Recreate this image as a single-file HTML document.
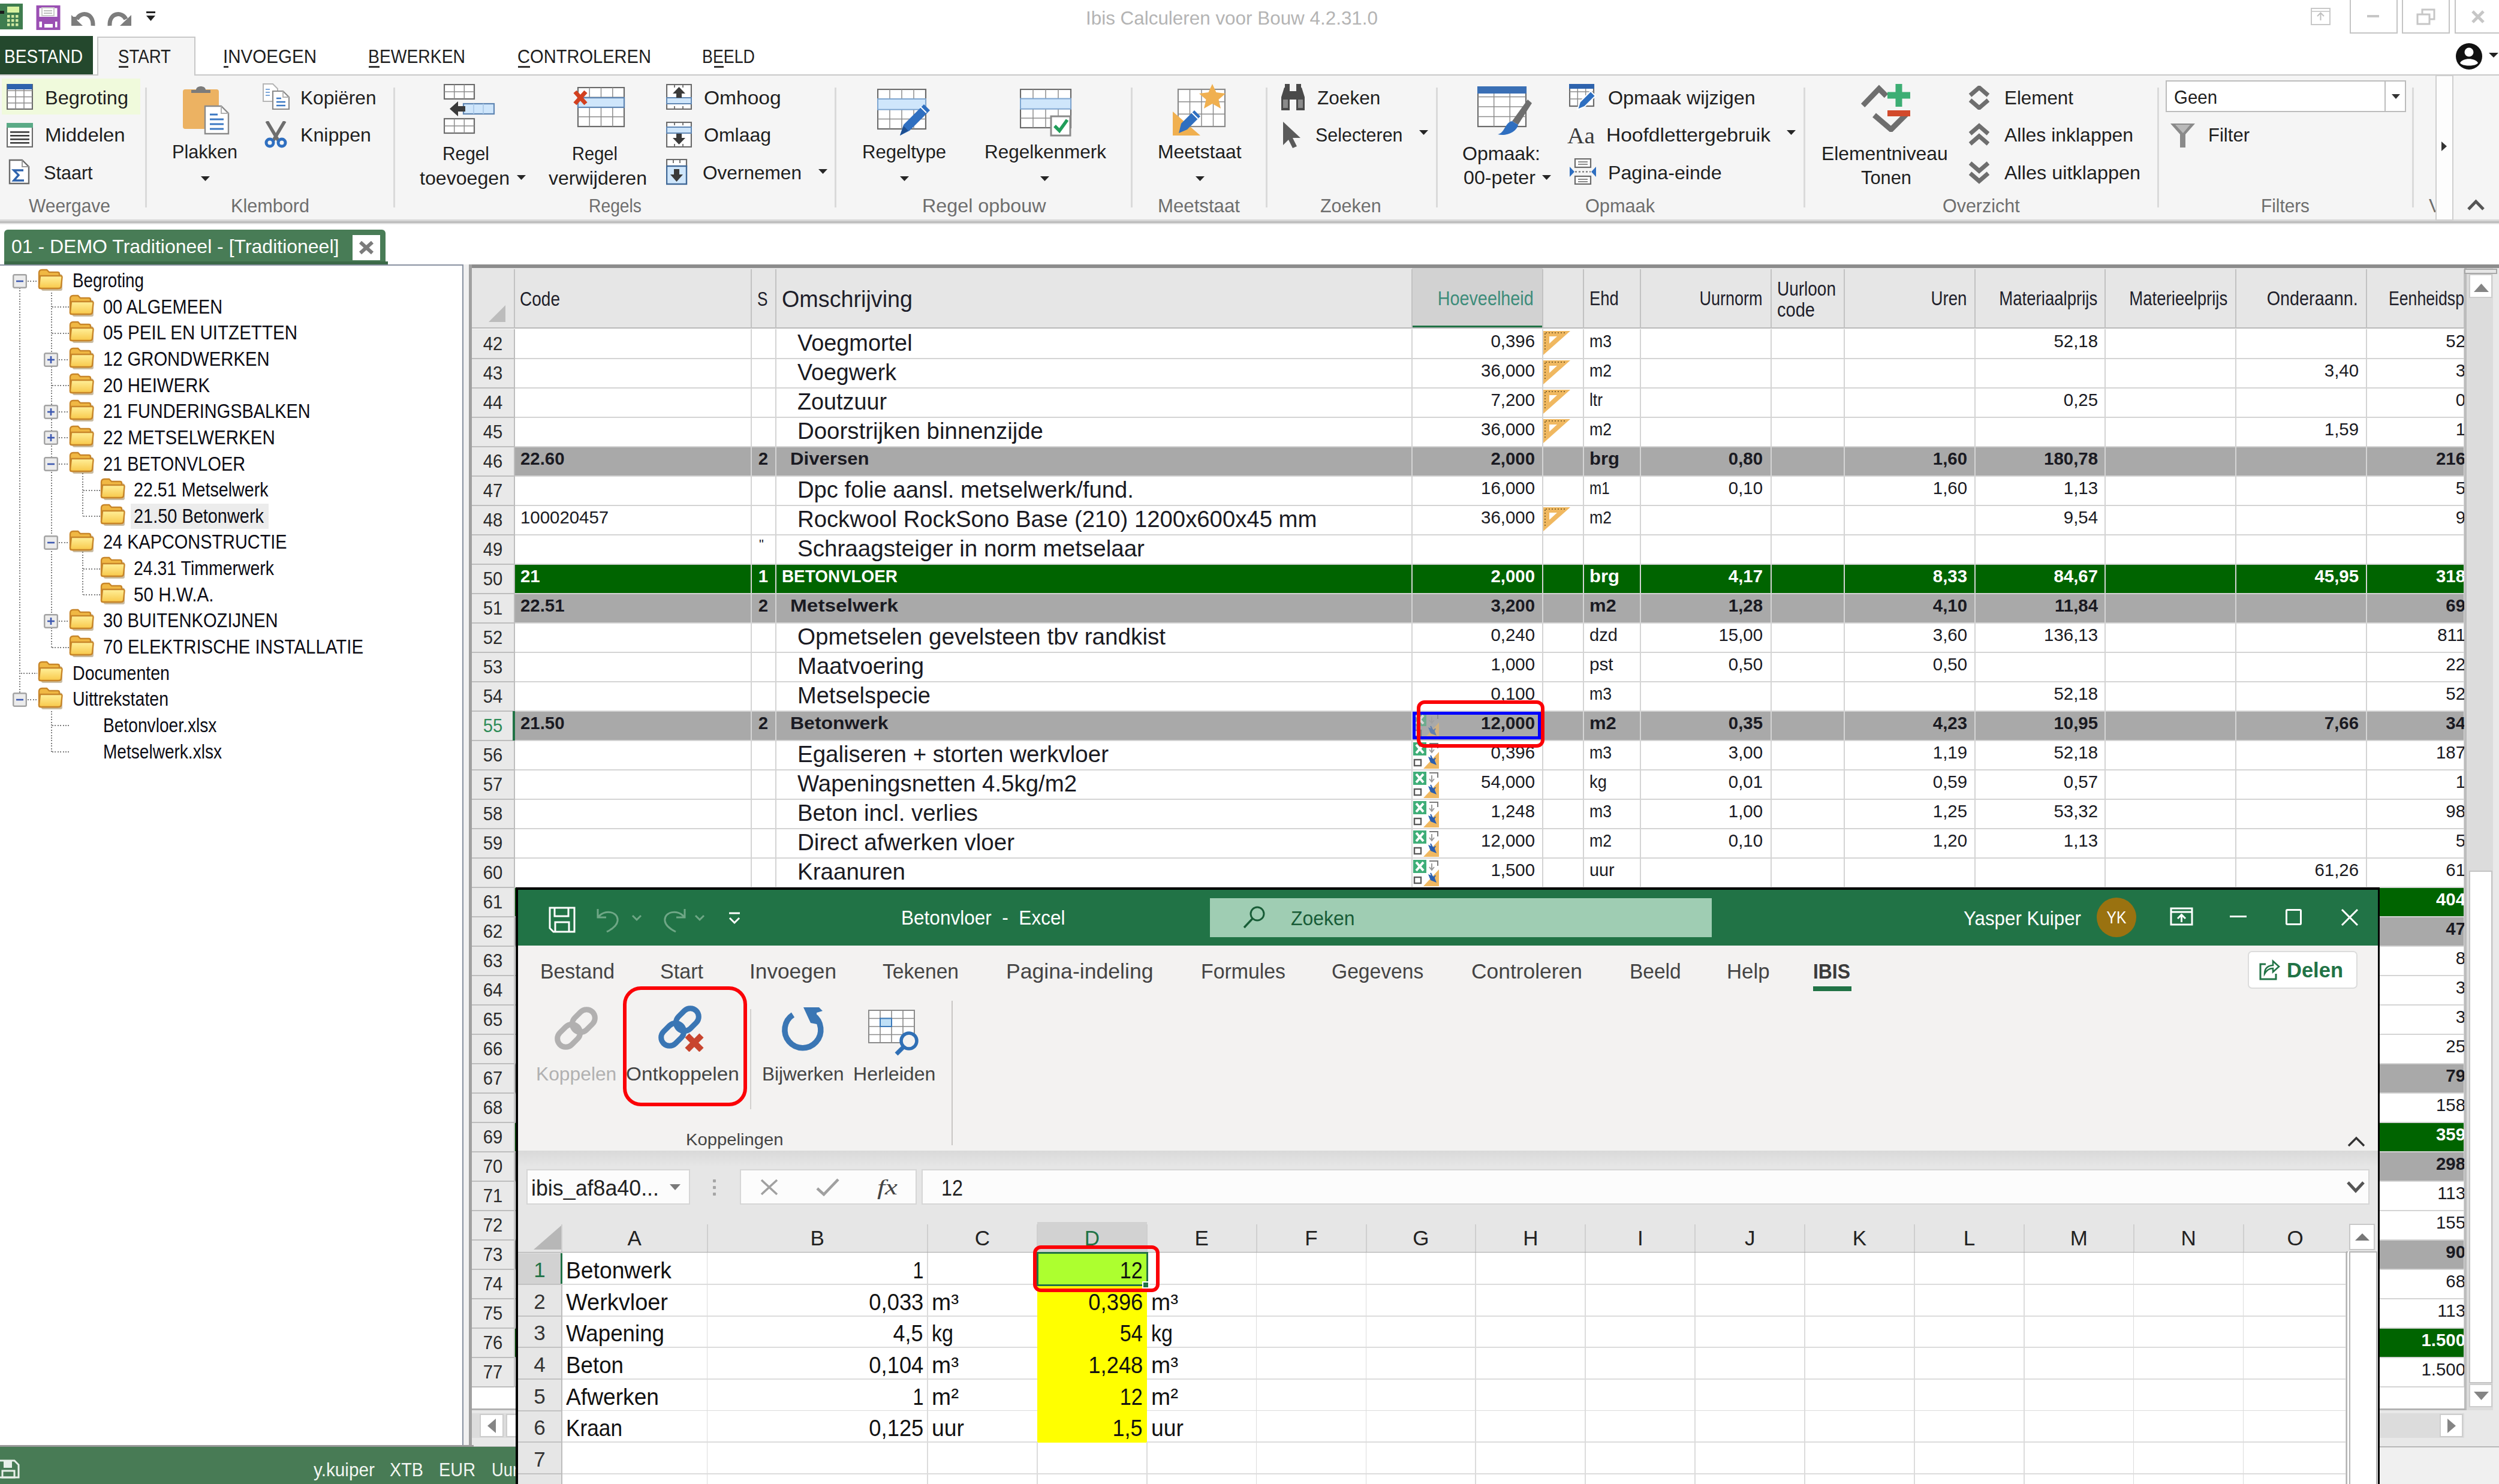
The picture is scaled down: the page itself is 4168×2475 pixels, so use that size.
<!DOCTYPE html>
<html><head><meta charset="utf-8"><title>Ibis Calculeren voor Bouw</title>
<style>
html,body{margin:0;padding:0;background:#fff;}
body{width:4168px;height:2475px;position:relative;overflow:hidden;font-family:"Liberation Sans",sans-serif;}
body>div,body>svg,body>span{position:absolute;}
.t{white-space:pre;display:block;}
</style></head>
<body>
<span class="t" style="top:9.4px;font-size:32px;line-height:42px;color:#b4b4b4;left:1811px;transform:scaleX(0.9813);transform-origin:left center;">Ibis Calculeren voor Bouw 4.2.31.0</span>
<svg style="left:0px;top:6px;" width="40" height="44" viewBox="0 0 40 44"><rect x="-6" y="0" width="44" height="43" fill="#3f7d4f"/><rect x="12" y="5" width="20" height="10" fill="#d9f2a0"/><rect x="12" y="19" width="4.5" height="4.5" fill="#cfe8a0"/><rect x="12" y="26" width="4.5" height="4.5" fill="#cfe8a0"/><rect x="12" y="33" width="4.5" height="4.5" fill="#cfe8a0"/><rect x="19" y="19" width="4.5" height="4.5" fill="#cfe8a0"/><rect x="19" y="26" width="4.5" height="4.5" fill="#cfe8a0"/><rect x="19" y="33" width="4.5" height="4.5" fill="#cfe8a0"/><rect x="26" y="19" width="4.5" height="4.5" fill="#cfe8a0"/><rect x="26" y="26" width="4.5" height="4.5" fill="#cfe8a0"/><rect x="26" y="33" width="4.5" height="4.5" fill="#cfe8a0"/><rect x="0" y="12" width="7" height="5" fill="#1c1c1c"/></svg>
<svg style="left:60px;top:9px;" width="41" height="41" viewBox="0 0 41 41"><path d="M3 2H38V39H3Z" fill="#fff" stroke="#9a4fb3" stroke-width="5"/><rect x="10" y="4" width="20" height="13" fill="#fff" stroke="#c9c9c9" stroke-width="2"/><rect x="13" y="8" width="14" height="2" fill="#bdbdbd"/><rect x="13" y="12" width="14" height="2" fill="#bdbdbd"/><rect x="3" y="19" width="35" height="8" fill="#9a4fb3"/><rect x="12" y="29" width="18" height="10" fill="#fff" stroke="#9a4fb3" stroke-width="4"/></svg>
<svg style="left:116px;top:16px;" width="46" height="30" viewBox="0 0 46 30"><path d="M9 26V12" stroke="#7d7d7d" stroke-width="7" fill="none"/><path d="M3 27H22L3 9Z" fill="#7d7d7d"/><path d="M12 16C18 3 40 4 39 27" stroke="#7d7d7d" stroke-width="7" fill="none"/></svg>
<svg style="left:176px;top:16px;" width="46" height="30" viewBox="0 0 46 30"><g transform="translate(46,0) scale(-1,1)"><path d="M3 27H22L3 9Z" fill="#7d7d7d"/><path d="M12 16C18 3 40 4 39 27" stroke="#7d7d7d" stroke-width="7" fill="none"/></g></svg>
<svg style="left:243px;top:18px;" width="18" height="20" viewBox="0 0 18 20"><rect x="1" y="1" width="15" height="3" fill="#222"/><path d="M1 8H16L8.5 17Z" fill="#222"/></svg>
<svg style="left:3853px;top:12px;" width="36" height="32" viewBox="0 0 36 32"><rect x="2" y="2" width="31" height="27" fill="#fff" stroke="#c8c8c8" stroke-width="2"/><path d="M17.5 22V10M12 15L17.5 9.5L23 15" stroke="#c0c0c0" stroke-width="2" fill="none"/><path d="M3 7H32" stroke="#d0d0d0" stroke-width="2"/></svg>
<div style="left:3919px;top:-2px;width:80px;height:58px;background:#fff;border:2px solid #c4c4c4;box-sizing:border-box;"></div>
<div style="left:4006px;top:-2px;width:80px;height:58px;background:#fff;border:2px solid #c4c4c4;box-sizing:border-box;"></div>
<div style="left:4094px;top:-2px;width:80px;height:58px;background:#fff;border:2px solid #c4c4c4;box-sizing:border-box;"></div>
<div style="left:3948px;top:25px;width:20px;height:4px;background:#c6c6c6;"></div>
<svg style="left:4030px;top:14px;" width="34" height="30" viewBox="0 0 34 30"><rect x="10" y="2" width="20" height="16" fill="#fff" stroke="#c6c6c6" stroke-width="3"/><rect x="2" y="10" width="20" height="16" fill="#fff" stroke="#c6c6c6" stroke-width="3"/></svg>
<svg style="left:4121px;top:16px;" width="24" height="24" viewBox="0 0 24 24"><path d="M3 3L21 21M21 3L3 21" stroke="#c6c6c6" stroke-width="5"/></svg>
<svg style="left:4095px;top:71px;" width="46" height="46" viewBox="0 0 46 46"><circle cx="23" cy="23" r="22" fill="#111"/><circle cx="23" cy="16" r="7.5" fill="#fff"/><path d="M8 34C12 25 34 25 38 34C34 40 12 40 8 34Z" fill="#fff"/></svg>
<svg style="left:4151px;top:88px;" width="17" height="10" viewBox="0 0 17 10"><path d="M0 0H16L8 8Z" fill="#222"/></svg>
<div style="left:0px;top:60px;width:155px;height:65px;background:#24482d;"></div>
<div style="left:0px;top:124px;width:4168px;height:2px;background:#c8c8c8;"></div>
<div style="left:162px;top:61px;width:164px;height:65px;background:#f5f5f5;border:2px solid #c8c8c8;border-bottom:none;box-sizing:border-box;"></div>
<span class="t" style="top:73.9px;font-size:31.5px;line-height:41px;color:#fff;left:7px;transform:scaleX(0.8945);transform-origin:left center;">BESTAND</span>
<span class="t" style="top:73.9px;font-size:31.5px;line-height:41px;color:#1e1e1e;left:197px;transform:scaleX(0.8768);transform-origin:left center;">START</span>
<div style="left:198px;top:110px;width:16px;height:2.5px;background:#333;"></div>
<span class="t" style="top:73.9px;font-size:31.5px;line-height:41px;color:#1e1e1e;left:372px;transform:scaleX(0.9381);transform-origin:left center;">INVOEGEN</span>
<div style="left:373px;top:110px;width:8px;height:2.5px;background:#333;"></div>
<span class="t" style="top:73.9px;font-size:31.5px;line-height:41px;color:#1e1e1e;left:614px;transform:scaleX(0.8986);transform-origin:left center;">BEWERKEN</span>
<div style="left:615px;top:110px;width:18px;height:2.5px;background:#333;"></div>
<span class="t" style="top:73.9px;font-size:31.5px;line-height:41px;color:#1e1e1e;left:863px;transform:scaleX(0.9233);transform-origin:left center;">CONTROLEREN</span>
<div style="left:864px;top:110px;width:20px;height:2.5px;background:#333;"></div>
<span class="t" style="top:73.9px;font-size:31.5px;line-height:41px;color:#1e1e1e;left:1171px;transform:scaleX(0.8518);transform-origin:left center;">BEELD</span>
<div style="left:1191px;top:110px;width:16px;height:2.5px;background:#333;"></div>
<div style="left:0px;top:126px;width:4168px;height:241px;background:#f5f5f5;"></div>
<div style="left:0px;top:366px;width:4168px;height:3px;background:#d6d6d6;"></div>
<div style="left:0px;top:369px;width:4168px;height:3px;background:#bdbdbd;"></div>
<div style="left:0px;top:372px;width:4168px;height:2px;background:#e4e4e4;"></div>
<div style="left:241.5px;top:146px;width:3px;height:200px;background:#dadada;"></div>
<div style="left:655.5px;top:146px;width:3px;height:200px;background:#dadada;"></div>
<div style="left:1391.5px;top:146px;width:3px;height:200px;background:#dadada;"></div>
<div style="left:1885.5px;top:146px;width:3px;height:200px;background:#dadada;"></div>
<div style="left:2110.5px;top:146px;width:3px;height:200px;background:#dadada;"></div>
<div style="left:2394.5px;top:146px;width:3px;height:200px;background:#dadada;"></div>
<div style="left:3007.5px;top:146px;width:3px;height:200px;background:#dadada;"></div>
<div style="left:3597.5px;top:146px;width:3px;height:200px;background:#dadada;"></div>
<div style="left:4022.5px;top:146px;width:3px;height:200px;background:#dadada;"></div>
<span class="t" style="top:323.4px;font-size:31.5px;line-height:41px;color:#6e6e6e;left:47.6px;transform:scaleX(0.9510);transform-origin:left center;">Weergave</span>
<span class="t" style="top:323.4px;font-size:31.5px;line-height:41px;color:#6e6e6e;left:385px;transform:scaleX(0.9716);transform-origin:left center;">Klembord</span>
<span class="t" style="top:323.4px;font-size:31.5px;line-height:41px;color:#6e6e6e;left:982px;transform:scaleX(0.8974);transform-origin:left center;">Regels</span>
<span class="t" style="top:323.4px;font-size:31.5px;line-height:41px;color:#6e6e6e;left:1538px;transform:scaleX(1.0253);transform-origin:left center;">Regel opbouw</span>
<span class="t" style="top:323.4px;font-size:31.5px;line-height:41px;color:#6e6e6e;left:1931px;transform:scaleX(0.9904);transform-origin:left center;">Meetstaat</span>
<span class="t" style="top:323.4px;font-size:31.5px;line-height:41px;color:#6e6e6e;left:2202px;transform:scaleX(0.9669);transform-origin:left center;">Zoeken</span>
<span class="t" style="top:323.4px;font-size:31.5px;line-height:41px;color:#6e6e6e;left:2643.7px;transform:scaleX(0.9743);transform-origin:left center;">Opmaak</span>
<span class="t" style="top:323.4px;font-size:31.5px;line-height:41px;color:#6e6e6e;left:3240px;transform:scaleX(0.9667);transform-origin:left center;">Overzicht</span>
<span class="t" style="top:323.4px;font-size:31.5px;line-height:41px;color:#6e6e6e;left:3771px;transform:scaleX(0.9446);transform-origin:left center;">Filters</span>
<span class="t" style="top:323.4px;font-size:31.5px;line-height:41px;color:#6e6e6e;left:4051px;clip-path:inset(0 8px 0 0);">V</span>
<div style="left:3px;top:131px;width:231px;height:60px;background:#f0fadc;"></div>
<svg style="left:11px;top:140px;" width="44" height="43" viewBox="0 0 44 43"><rect x="1" y="1" width="42" height="41" fill="#fff" stroke="#6a6a6a" stroke-width="2.2"/><path d="M15.0 1V42" stroke="#8c8c8c" stroke-width="1.5"/><path d="M29.0 1V42" stroke="#8c8c8c" stroke-width="1.5"/><path d="M1 11.2H43" stroke="#8c8c8c" stroke-width="1.5"/><path d="M1 21.5H43" stroke="#8c8c8c" stroke-width="1.5"/><path d="M1 31.8H43" stroke="#8c8c8c" stroke-width="1.5"/><rect x="1" y="0" width="42" height="9" fill="#2e63ad"/></svg>
<svg style="left:11px;top:205px;" width="44" height="41" viewBox="0 0 44 41"><rect x="1" y="1" width="42" height="39" fill="#fff" stroke="#6a6a6a" stroke-width="2.2"/><rect x="0" y="0" width="44" height="8" fill="#5aaa86"/><rect x="6" y="14" width="32" height="2.6" fill="#3a3a3a"/><rect x="6" y="20" width="32" height="2.6" fill="#3a3a3a"/><rect x="6" y="26" width="32" height="2.6" fill="#3a3a3a"/><rect x="6" y="32" width="32" height="2.6" fill="#3a3a3a"/></svg>
<svg style="left:14px;top:265px;" width="36" height="43" viewBox="0 0 36 43"><path d="M2 2H23L34 13V41H2Z" fill="#fff" stroke="#6a6a6a" stroke-width="2.4"/><path d="M23 2V13H34" fill="none" stroke="#9a9a9a" stroke-width="2"/><path d="M25 19H9L17 27L9 36H26" fill="none" stroke="#2e63ad" stroke-width="3.4"/></svg>
<span class="t" style="top:142.9px;font-size:31.5px;line-height:41px;color:#1e1e1e;left:75px;transform:scaleX(1.0307);transform-origin:left center;">Begroting</span>
<span class="t" style="top:204.9px;font-size:31.5px;line-height:41px;color:#1e1e1e;left:75px;transform:scaleX(1.0458);transform-origin:left center;">Middelen</span>
<span class="t" style="top:267.9px;font-size:31.5px;line-height:41px;color:#1e1e1e;left:73px;transform:scaleX(0.9709);transform-origin:left center;">Staart</span>
<svg style="left:305px;top:141px;" width="78" height="84" viewBox="0 0 78 84"><rect x="0" y="8" width="60" height="66" rx="4" fill="#ecb262"/><path d="M14 14H46V9H38C38 1 22 1 22 9H14Z" fill="#7b7b7b"/><path d="M37 36H64L76 48V82H37Z" fill="#fff" stroke="#8a8a8a" stroke-width="2.4"/><path d="M64 36V48H76" fill="none" stroke="#b0b0b0" stroke-width="2"/><path d="M45 50H58M45 58H68M45 66H68M45 74H68" stroke="#3b78c3" stroke-width="3"/></svg>
<span class="t" style="top:232.9px;font-size:31.5px;line-height:41px;color:#1e1e1e;left:287px;transform:scaleX(0.9725);transform-origin:left center;">Plakken</span>
<svg style="left:335px;top:294px;" width="16" height="9" viewBox="0 0 16 9"><path d="M0 0H15L7.5 8Z" fill="#262626"/></svg>
<svg style="left:438px;top:139px;" width="46" height="44" viewBox="0 0 46 44"><path d="M1 1H17L25 9V30H1Z" fill="#fff" stroke="#b5b5b5" stroke-width="2"/><path d="M5 10H12M5 15H12M5 20H12" stroke="#7da7d9" stroke-width="2"/><path d="M17 13H34L44 23V43H17Z" fill="#fff" stroke="#8a8a8a" stroke-width="2.2"/><path d="M34 13V23H44" fill="none" stroke="#b0b0b0" stroke-width="1.8"/><path d="M23 25H31M23 31H38M23 37H38" stroke="#3b78c3" stroke-width="2.6"/></svg>
<span class="t" style="top:142.9px;font-size:31.5px;line-height:41px;color:#1e1e1e;left:501px;transform:scaleX(1.0032);transform-origin:left center;">Kopiëren</span>
<svg style="left:440px;top:202px;" width="40" height="45" viewBox="0 0 40 45"><path d="M5 0L24 32M35 0L16 32" stroke="#6e6e6e" stroke-width="5.5" fill="none"/><circle cx="10" cy="36" r="6" fill="none" stroke="#2f6fc0" stroke-width="5"/><circle cx="30" cy="36" r="6" fill="none" stroke="#2f6fc0" stroke-width="5"/></svg>
<span class="t" style="top:204.9px;font-size:31.5px;line-height:41px;color:#1e1e1e;left:501px;transform:scaleX(1.0207);transform-origin:left center;">Knippen</span>
<svg style="left:740px;top:140px;" width="86" height="84" viewBox="0 0 86 84"><g><rect x="1" y="1" width="50" height="24" fill="#fff" stroke="#6a6a6a" stroke-width="2.2"/><path d="M17.7 1V25" stroke="#8c8c8c" stroke-width="1.5"/><path d="M34.3 1V25" stroke="#8c8c8c" stroke-width="1.5"/><path d="M1 13.0H51" stroke="#8c8c8c" stroke-width="1.5"/></g><g transform="translate(0,57)"><rect x="1" y="1" width="50" height="24" fill="#fff" stroke="#6a6a6a" stroke-width="2.2"/><path d="M17.7 1V25" stroke="#8c8c8c" stroke-width="1.5"/><path d="M34.3 1V25" stroke="#8c8c8c" stroke-width="1.5"/><path d="M1 13.0H51" stroke="#8c8c8c" stroke-width="1.5"/></g><rect x="33" y="33" width="51" height="17" fill="#cfe6fb" stroke="#5f86b3" stroke-width="2.2"/><path d="M50 33V50M66 33V50" stroke="#a9c7e6" stroke-width="1.6"/><path d="M10 41.5L24 29V37H36V46H24V54Z" fill="#3a3a3a"/></svg>
<span class="t" style="top:235.9px;font-size:31.5px;line-height:41px;color:#1e1e1e;left:738px;transform:scaleX(0.9476);transform-origin:left center;">Regel</span>
<span class="t" style="top:276.9px;font-size:31.5px;line-height:41px;color:#1e1e1e;left:700px;transform:scaleX(1.0194);transform-origin:left center;">toevoegen</span>
<svg style="left:862px;top:292px;" width="16" height="9" viewBox="0 0 16 9"><path d="M0 0H15L7.5 8Z" fill="#262626"/></svg>
<svg style="left:955px;top:145px;" width="88" height="68" viewBox="0 0 88 68"><g transform="translate(8,0)"><rect x="1" y="1" width="77" height="65" fill="#fff" stroke="#6a6a6a" stroke-width="2.2"/><path d="M20.2 1V66" stroke="#8c8c8c" stroke-width="1.5"/><path d="M39.5 1V66" stroke="#8c8c8c" stroke-width="1.5"/><path d="M58.8 1V66" stroke="#8c8c8c" stroke-width="1.5"/><path d="M1 17.2H78" stroke="#8c8c8c" stroke-width="1.5"/><path d="M1 33.5H78" stroke="#8c8c8c" stroke-width="1.5"/><path d="M1 49.8H78" stroke="#8c8c8c" stroke-width="1.5"/></g><rect x="9" y="18" width="77" height="16" fill="#cfe6fb" stroke="#5f86b3" stroke-width="2.2"/><path d="M4 8L22 28M22 8L4 28" stroke="#d2401f" stroke-width="7"/></svg>
<span class="t" style="top:235.9px;font-size:31.5px;line-height:41px;color:#1e1e1e;left:954px;transform:scaleX(0.9233);transform-origin:left center;">Regel</span>
<span class="t" style="top:276.9px;font-size:31.5px;line-height:41px;color:#1e1e1e;left:914.7px;transform:scaleX(1.0181);transform-origin:left center;">verwijderen</span>
<svg style="left:1111px;top:140px;" width="43" height="43" viewBox="0 0 43 43"><rect x="1" y="1" width="41" height="41" fill="#fff" stroke="#6a6a6a" stroke-width="2.2"/><path d="M14 1V6M28 1V6M14 37V42M28 37V42" stroke="#6a6a6a" stroke-width="1.8"/><rect x="1" y="23" width="41" height="10" fill="#cfe6fb" stroke="#5f86b3" stroke-width="2"/><path d="M21.5 5L32 16H26V23H17V16H11Z" fill="#3a3a3a"/></svg>
<span class="t" style="top:142.9px;font-size:31.5px;line-height:41px;color:#1e1e1e;left:1174px;transform:scaleX(1.0651);transform-origin:left center;">Omhoog</span>
<svg style="left:1111px;top:203px;" width="43" height="43" viewBox="0 0 43 43"><rect x="1" y="1" width="41" height="41" fill="#fff" stroke="#6a6a6a" stroke-width="2.2"/><path d="M14 1V6M28 1V6M14 37V42M28 37V42" stroke="#6a6a6a" stroke-width="1.8"/><rect x="1" y="9" width="41" height="10" fill="#cfe6fb" stroke="#5f86b3" stroke-width="2"/><path d="M21.5 38L32 27H26V20H17V27H11Z" fill="#3a3a3a"/></svg>
<span class="t" style="top:204.9px;font-size:31.5px;line-height:41px;color:#1e1e1e;left:1174px;transform:scaleX(1.0154);transform-origin:left center;">Omlaag</span>
<svg style="left:1111px;top:265px;" width="36" height="44" viewBox="0 0 36 44"><rect x="1" y="1" width="33" height="12" fill="#fff" stroke="#6a6a6a" stroke-width="2.2"/><path d="M12 1V7M23 1V7" stroke="#6a6a6a" stroke-width="1.8"/><rect x="1" y="12" width="33" height="30" fill="#cfe6fb" stroke="#3f6796" stroke-width="2.4"/><path d="M17.5 38L28 26H22V17H13V26H7Z" fill="#3a3a3a"/></svg>
<span class="t" style="top:267.9px;font-size:31.5px;line-height:41px;color:#1e1e1e;left:1172px;transform:scaleX(1.0026);transform-origin:left center;">Overnemen</span>
<svg style="left:1365px;top:282px;" width="16" height="9" viewBox="0 0 16 9"><path d="M0 0H15L7.5 8Z" fill="#262626"/></svg>
<svg style="left:1463px;top:148px;" width="90" height="82" viewBox="0 0 90 82"><rect x="1" y="1" width="80" height="66" fill="#fff" stroke="#6a6a6a" stroke-width="2.2"/><path d="M21.0 1V67" stroke="#8c8c8c" stroke-width="1.5"/><path d="M41.0 1V67" stroke="#8c8c8c" stroke-width="1.5"/><path d="M61.0 1V67" stroke="#8c8c8c" stroke-width="1.5"/><path d="M1 17.5H81" stroke="#8c8c8c" stroke-width="1.5"/><path d="M1 34.0H81" stroke="#8c8c8c" stroke-width="1.5"/><path d="M1 50.5H81" stroke="#8c8c8c" stroke-width="1.5"/><rect x="1" y="17.0" width="80" height="17.7" fill="#cfe6fb" stroke="#7fa6d0" stroke-width="2"/><path d="M38 78L44 60L78 26L88 36L54 70Z" fill="#2f6fc0"/><path d="M38 78L44 62L52 70Z" fill="#1d4f91"/><path d="M72 30L82 40" stroke="#fff" stroke-width="2"/></svg>
<span class="t" style="top:232.9px;font-size:31.5px;line-height:41px;color:#1e1e1e;left:1438px;transform:scaleX(0.9870);transform-origin:left center;">Regeltype</span>
<svg style="left:1501px;top:294px;" width="16" height="9" viewBox="0 0 16 9"><path d="M0 0H15L7.5 8Z" fill="#262626"/></svg>
<svg style="left:1701px;top:148px;" width="88" height="82" viewBox="0 0 88 82"><rect x="1" y="1" width="84" height="64" fill="#fff" stroke="#6a6a6a" stroke-width="2.2"/><path d="M22.0 1V65" stroke="#8c8c8c" stroke-width="1.5"/><path d="M43.0 1V65" stroke="#8c8c8c" stroke-width="1.5"/><path d="M64.0 1V65" stroke="#8c8c8c" stroke-width="1.5"/><path d="M1 17.0H85" stroke="#8c8c8c" stroke-width="1.5"/><path d="M1 33.0H85" stroke="#8c8c8c" stroke-width="1.5"/><path d="M1 49.0H85" stroke="#8c8c8c" stroke-width="1.5"/><rect x="1" y="16.5" width="84" height="17.2" fill="#cfe6fb" stroke="#7fa6d0" stroke-width="2"/><rect x="52" y="46" width="32" height="32" fill="#fff" stroke="#8a8a8a" stroke-width="3"/><path d="M58 62L66 70L79 52" stroke="#1f9d59" stroke-width="5.5" fill="none"/></svg>
<span class="t" style="top:232.9px;font-size:31.5px;line-height:41px;color:#1e1e1e;left:1642px;transform:scaleX(0.9995);transform-origin:left center;">Regelkenmerk</span>
<svg style="left:1735px;top:294px;" width="16" height="9" viewBox="0 0 16 9"><path d="M0 0H15L7.5 8Z" fill="#262626"/></svg>
<svg style="left:1956px;top:140px;" width="90" height="88" viewBox="0 0 90 88"><g transform="translate(8,8)"><rect x="1" y="1" width="78" height="62" fill="#fff" stroke="#8a8a8a" stroke-width="2.2"/><path d="M20.5 1V63" stroke="#8c8c8c" stroke-width="1.5"/><path d="M40.0 1V63" stroke="#8c8c8c" stroke-width="1.5"/><path d="M59.5 1V63" stroke="#8c8c8c" stroke-width="1.5"/><path d="M1 21.7H79" stroke="#8c8c8c" stroke-width="1.5"/><path d="M1 42.3H79" stroke="#8c8c8c" stroke-width="1.5"/></g><path d="M66 0L72.5 14L88 16L76.5 26L80 41L66 33L52 41L55.5 26L44 16L59.5 14Z" fill="#f0b050"/><path d="M0 86V46L46 86Z" fill="#f0b050"/><path d="M10 82L14 66L36 44L46 54L24 76Z" fill="#2f6fc0"/><path d="M32 48L42 58" stroke="#fff" stroke-width="2"/></svg>
<span class="t" style="top:232.9px;font-size:31.5px;line-height:41px;color:#1e1e1e;left:1931px;transform:scaleX(1.0092);transform-origin:left center;">Meetstaat</span>
<svg style="left:1994px;top:294px;" width="16" height="9" viewBox="0 0 16 9"><path d="M0 0H15L7.5 8Z" fill="#262626"/></svg>
<svg style="left:2134px;top:140px;" width="45" height="45" viewBox="0 0 45 45"><path d="M3 44V22L8 6H17V44Z" fill="#4a4a4a"/><path d="M42 44V22L37 6H28V44Z" fill="#4a4a4a"/><rect x="15" y="12" width="15" height="14" fill="#4a4a4a"/><rect x="9" y="0" width="8" height="8" fill="#4a4a4a"/><rect x="28" y="0" width="8" height="8" fill="#4a4a4a"/><rect x="6" y="26" width="8" height="14" fill="#8a8a8a"/><rect x="31" y="26" width="8" height="14" fill="#8a8a8a"/></svg>
<span class="t" style="top:142.9px;font-size:31.5px;line-height:41px;color:#1e1e1e;left:2196.6px;transform:scaleX(1.0031);transform-origin:left center;">Zoeken</span>
<svg style="left:2138px;top:203px;" width="34" height="45" viewBox="0 0 34 45"><path d="M2 0L31 27H18L25 41L18 44L11 30L2 39Z" fill="#5a5a5a"/></svg>
<span class="t" style="top:204.9px;font-size:31.5px;line-height:41px;color:#1e1e1e;left:2194px;transform:scaleX(0.9661);transform-origin:left center;">Selecteren</span>
<svg style="left:2367px;top:217px;" width="16" height="9" viewBox="0 0 16 9"><path d="M0 0H15L7.5 8Z" fill="#262626"/></svg>
<svg style="left:2464px;top:144px;" width="92" height="84" viewBox="0 0 92 84"><rect x="1" y="1" width="80" height="66" fill="#fff" stroke="#6a6a6a" stroke-width="2.2"/><path d="M27.7 1V67" stroke="#8c8c8c" stroke-width="1.5"/><path d="M54.3 1V67" stroke="#8c8c8c" stroke-width="1.5"/><path d="M1 17.5H81" stroke="#8c8c8c" stroke-width="1.5"/><path d="M1 34.0H81" stroke="#8c8c8c" stroke-width="1.5"/><path d="M1 50.5H81" stroke="#8c8c8c" stroke-width="1.5"/><rect x="0" y="0" width="82" height="12" fill="#3a6fb5"/><path d="M58 58L84 22L91 28L68 64Z" fill="#6e6e6e"/><path d="M34 80C46 78 46 60 58 58L68 64C66 76 48 84 34 80Z" fill="#2f6fc0"/></svg>
<span class="t" style="top:235.9px;font-size:31.5px;line-height:41px;color:#1e1e1e;left:2439px;transform:scaleX(1.0171);transform-origin:left center;">Opmaak:</span>
<span class="t" style="top:275.9px;font-size:31.5px;line-height:41px;color:#1e1e1e;left:2441px;transform:scaleX(1.0228);transform-origin:left center;">00-peter</span>
<svg style="left:2572px;top:292px;" width="16" height="9" viewBox="0 0 16 9"><path d="M0 0H15L7.5 8Z" fill="#262626"/></svg>
<svg style="left:2617px;top:140px;" width="46" height="44" viewBox="0 0 46 44"><rect x="1" y="1" width="40" height="36" fill="#fff" stroke="#6a6a6a" stroke-width="2.2"/><path d="M14.3 1V37" stroke="#8c8c8c" stroke-width="1.5"/><path d="M27.7 1V37" stroke="#8c8c8c" stroke-width="1.5"/><path d="M1 13.0H41" stroke="#8c8c8c" stroke-width="1.5"/><path d="M1 25.0H41" stroke="#8c8c8c" stroke-width="1.5"/><rect x="0" y="0" width="42" height="8" fill="#2e63ad"/><path d="M14 43L18 30L36 12L44 20L26 38Z" fill="#2f6fc0" stroke="#fff" stroke-width="2"/></svg>
<span class="t" style="top:142.9px;font-size:31.5px;line-height:41px;color:#1e1e1e;left:2682px;transform:scaleX(1.0244);transform-origin:left center;">Opmaak wijzigen</span>
<span class="t" style="top:201.9px;font-size:38px;line-height:49px;color:#3a3a3a;font-family:'Liberation Serif',serif;left:2614px;transform:scaleX(1.0381);transform-origin:left center;">Aa</span>
<span class="t" style="top:204.9px;font-size:31.5px;line-height:41px;color:#1e1e1e;left:2679px;transform:scaleX(1.0645);transform-origin:left center;">Hoofdlettergebruik</span>
<svg style="left:2980px;top:217px;" width="16" height="9" viewBox="0 0 16 9"><path d="M0 0H15L7.5 8Z" fill="#262626"/></svg>
<svg style="left:2618px;top:264px;" width="44" height="44" viewBox="0 0 44 44"><rect x="9" y="1" width="26" height="14" fill="#fff" stroke="#6a6a6a" stroke-width="2.2"/><path d="M14 6H30M14 10H30" stroke="#8a8a8a" stroke-width="1.8"/><rect x="9" y="30" width="26" height="13" fill="#fff" stroke="#6a6a6a" stroke-width="2.2"/><path d="M14 35H30M14 39H30" stroke="#8a8a8a" stroke-width="1.8"/><path d="M9 22.5H35" stroke="#6a6a6a" stroke-width="2" stroke-dasharray="3 3"/><path d="M0 14L8 22.5L0 31Z" fill="#2f6fc0"/><path d="M44 14L36 22.5L44 31Z" fill="#2f6fc0"/></svg>
<span class="t" style="top:267.9px;font-size:31.5px;line-height:41px;color:#1e1e1e;left:2682px;transform:scaleX(1.0212);transform-origin:left center;">Pagina-einde</span>
<svg style="left:3104px;top:140px;" width="84" height="80" viewBox="0 0 84 80"><path d="M3 36L30 8L42 20" stroke="#6e6e6e" stroke-width="9" fill="none"/><path d="M22 52L50 76L76 50" stroke="#6e6e6e" stroke-width="9" fill="none"/><path d="M63 0V38M44 19H82" stroke="#3dae74" stroke-width="11"/><rect x="44" y="44" width="38" height="10" fill="#d24a2c"/></svg>
<span class="t" style="top:235.9px;font-size:31.5px;line-height:41px;color:#1e1e1e;left:3038px;transform:scaleX(1.0111);transform-origin:left center;">Elementniveau</span>
<span class="t" style="top:275.9px;font-size:31.5px;line-height:41px;color:#1e1e1e;left:3104px;transform:scaleX(0.9787);transform-origin:left center;">Tonen</span>
<svg style="left:3282px;top:143px;" width="38" height="40" viewBox="0 0 38 40"><path d="M4 16L19 3L34 16" stroke="#6e6e6e" stroke-width="7" fill="none"/><path d="M4 24L19 37L34 24" stroke="#6e6e6e" stroke-width="7" fill="none"/></svg>
<span class="t" style="top:142.9px;font-size:31.5px;line-height:41px;color:#1e1e1e;left:3343px;transform:scaleX(0.9951);transform-origin:left center;">Element</span>
<svg style="left:3282px;top:205px;" width="38" height="40" viewBox="0 0 38 40"><path d="M4 18L19 5L34 18" stroke="#6e6e6e" stroke-width="7" fill="none"/><path d="M4 35L19 22L34 35" stroke="#6e6e6e" stroke-width="7" fill="none"/></svg>
<span class="t" style="top:204.9px;font-size:31.5px;line-height:41px;color:#1e1e1e;left:3343px;transform:scaleX(1.0147);transform-origin:left center;">Alles inklappen</span>
<svg style="left:3282px;top:267px;" width="38" height="40" viewBox="0 0 38 40"><path d="M4 5L19 18L34 5" stroke="#6e6e6e" stroke-width="7" fill="none"/><path d="M4 22L19 35L34 22" stroke="#6e6e6e" stroke-width="7" fill="none"/></svg>
<span class="t" style="top:267.9px;font-size:31.5px;line-height:41px;color:#1e1e1e;left:3343px;transform:scaleX(1.0288);transform-origin:left center;">Alles uitklappen</span>
<div style="left:3612px;top:134px;width:401px;height:53px;background:#fff;border:2px solid #bcbcbc;box-sizing:border-box;"></div>
<div style="left:3977px;top:136px;width:2px;height:49px;background:#bcbcbc;"></div>
<span class="t" style="top:141.9px;font-size:31.5px;line-height:41px;color:#1e1e1e;left:3626px;transform:scaleX(0.9343);transform-origin:left center;">Geen</span>
<svg style="left:3989px;top:157px;" width="16" height="10" viewBox="0 0 16 10"><path d="M0 0H14L7 8Z" fill="#333"/></svg>
<svg style="left:3619px;top:204px;" width="44" height="44" viewBox="0 0 44 44"><path d="M1 2H42L26 20V42H17V20Z" fill="#8a8a8a"/><path d="M9 4H34L22 18Z" fill="#d9d9d9" opacity=".6"/></svg>
<span class="t" style="top:204.9px;font-size:31.5px;line-height:41px;color:#1e1e1e;left:3683px;transform:scaleX(0.9857);transform-origin:left center;">Filter</span>
<div style="left:4062px;top:125px;width:30px;height:243px;background:#fdfdfd;border:2px solid #cfcfcf;box-sizing:border-box;"></div>
<svg style="left:4071px;top:236px;" width="12" height="16" viewBox="0 0 12 16"><path d="M1 0L10 8L1 16Z" fill="#333"/></svg>
<svg style="left:4114px;top:332px;" width="32" height="20" viewBox="0 0 32 20"><path d="M3 17L15.5 4L28 17" stroke="#555" stroke-width="5" fill="none"/></svg>
<div style="left:7px;top:383px;width:636px;height:57px;background:#487c56;border-radius:6px 6px 0 0;"></div>
<div style="left:7px;top:436px;width:640px;height:5px;background:#3c6a48;"></div>
<span class="t" style="top:390.9px;font-size:31.5px;line-height:41px;color:#fff;left:18.6px;transform:scaleX(1.0155);transform-origin:left center;">01 - DEMO Traditioneel - [Traditioneel]</span>
<div style="left:588px;top:392px;width:46px;height:42px;background:#fff;"></div>
<svg style="left:598px;top:402px;" width="26" height="22" viewBox="0 0 26 22"><path d="M3 2L23 20M23 2L3 20" stroke="#7c7c7c" stroke-width="6"/></svg>
<svg width="0" height="0" style="left:0;top:0"><defs><linearGradient id="fg" x1="0" y1="0" x2="0" y2="1"><stop offset="0" stop-color="#fff09a"/><stop offset="1" stop-color="#f8c84a"/></linearGradient></defs></svg>
<div style="left:772px;top:441px;width:10px;height:1971px;background:#f0f0f0;"></div>
<div style="left:0px;top:441px;width:772.5px;height:1971px;background:#fff;border:2.5px solid #8790a0;border-left:none;box-sizing:border-box;"></div>
<div style="left:32px;top:479.6px;width:2px;height:676.24px;background:repeating-linear-gradient(180deg,#808080 0 2px,transparent 2px 4.4px);"></div>
<div style="left:85px;top:487.6px;width:2px;height:591.96px;background:repeating-linear-gradient(180deg,#808080 0 2px,transparent 2px 4.4px);"></div>
<div style="left:137px;top:785.08px;width:2px;height:76.28px;background:repeating-linear-gradient(180deg,#808080 0 2px,transparent 2px 4.4px);"></div>
<div style="left:137px;top:916px;width:2px;height:76.28px;background:repeating-linear-gradient(180deg,#808080 0 2px,transparent 2px 4.4px);"></div>
<div style="left:85px;top:1185.84px;width:2px;height:68.28px;background:repeating-linear-gradient(180deg,#808080 0 2px,transparent 2px 4.4px);"></div>
<div style="left:46px;top:467.6px;width:16px;height:2px;background:repeating-linear-gradient(90deg,#808080 0 2px,transparent 2px 4.4px);"></div>
<svg style="left:21px;top:456.6px;" width="24" height="24" viewBox="0 0 24 24"><rect x="1.2" y="1.2" width="21.600" height="21.600" rx="2" fill="#ececec" stroke="#a3a3a3" stroke-width="2.4"/><path d="M6 12H18" stroke="#3d58b0" stroke-width="2.6"/></svg>
<svg style="left:62px;top:446.6px;" width="46" height="40" viewBox="0 0 46 40"><path d="M5 12Q5 8 9 8H36Q40 8 40 12V33Q40 36 37 36H8Q5 36 5 33Z" fill="#8a6a30" opacity=".45" transform="translate(2,2)"/><path d="M3 8Q3 3 8 3H16L20 7H34Q37 7 37 10V31Q37 34 34 34H6Q3 34 3 31Z" fill="#f0b844" stroke="#c8862a" stroke-width="2.4"/><path d="M5 13H39Q42 13 41.500 16L40 31Q39.500 34 36 34H6Q3 34 3 31Z" fill="url(#fg)" stroke="#c8862a" stroke-width="2.4"/></svg>
<span class="t" style="top:446.0px;font-size:33.5px;line-height:44px;color:#0c0c14;left:121px;transform:scaleX(0.8298);transform-origin:left center;">Begroting</span>
<div style="left:87px;top:511.24px;width:28px;height:2px;background:repeating-linear-gradient(90deg,#808080 0 2px,transparent 2px 4.4px);"></div>
<svg style="left:114px;top:490.24px;" width="46" height="40" viewBox="0 0 46 40"><path d="M5 12Q5 8 9 8H36Q40 8 40 12V33Q40 36 37 36H8Q5 36 5 33Z" fill="#8a6a30" opacity=".45" transform="translate(2,2)"/><path d="M3 8Q3 3 8 3H16L20 7H34Q37 7 37 10V31Q37 34 34 34H6Q3 34 3 31Z" fill="#f0b844" stroke="#c8862a" stroke-width="2.4"/><path d="M5 13H39Q42 13 41.500 16L40 31Q39.500 34 36 34H6Q3 34 3 31Z" fill="url(#fg)" stroke="#c8862a" stroke-width="2.4"/></svg>
<span class="t" style="top:489.6px;font-size:33.5px;line-height:44px;color:#0c0c14;left:172px;transform:scaleX(0.8619);transform-origin:left center;">00 ALGEMEEN</span>
<div style="left:87px;top:554.88px;width:28px;height:2px;background:repeating-linear-gradient(90deg,#808080 0 2px,transparent 2px 4.4px);"></div>
<svg style="left:114px;top:533.88px;" width="46" height="40" viewBox="0 0 46 40"><path d="M5 12Q5 8 9 8H36Q40 8 40 12V33Q40 36 37 36H8Q5 36 5 33Z" fill="#8a6a30" opacity=".45" transform="translate(2,2)"/><path d="M3 8Q3 3 8 3H16L20 7H34Q37 7 37 10V31Q37 34 34 34H6Q3 34 3 31Z" fill="#f0b844" stroke="#c8862a" stroke-width="2.4"/><path d="M5 13H39Q42 13 41.500 16L40 31Q39.500 34 36 34H6Q3 34 3 31Z" fill="url(#fg)" stroke="#c8862a" stroke-width="2.4"/></svg>
<span class="t" style="top:533.3px;font-size:33.5px;line-height:44px;color:#0c0c14;left:172px;transform:scaleX(0.8820);transform-origin:left center;">05 PEIL EN UITZETTEN</span>
<div style="left:98px;top:598.52px;width:17px;height:2px;background:repeating-linear-gradient(90deg,#808080 0 2px,transparent 2px 4.4px);"></div>
<svg style="left:73px;top:587.52px;" width="24" height="24" viewBox="0 0 24 24"><rect x="1.2" y="1.2" width="21.600" height="21.600" rx="2" fill="#ececec" stroke="#a3a3a3" stroke-width="2.4"/><path d="M6 12H18" stroke="#3d58b0" stroke-width="2.6"/><path d="M12 6V18" stroke="#3d58b0" stroke-width="2.6"/></svg>
<svg style="left:114px;top:577.52px;" width="46" height="40" viewBox="0 0 46 40"><path d="M5 12Q5 8 9 8H36Q40 8 40 12V33Q40 36 37 36H8Q5 36 5 33Z" fill="#8a6a30" opacity=".45" transform="translate(2,2)"/><path d="M3 8Q3 3 8 3H16L20 7H34Q37 7 37 10V31Q37 34 34 34H6Q3 34 3 31Z" fill="#f0b844" stroke="#c8862a" stroke-width="2.4"/><path d="M5 13H39Q42 13 41.500 16L40 31Q39.500 34 36 34H6Q3 34 3 31Z" fill="url(#fg)" stroke="#c8862a" stroke-width="2.4"/></svg>
<span class="t" style="top:576.9px;font-size:33.5px;line-height:44px;color:#0c0c14;left:172px;transform:scaleX(0.8718);transform-origin:left center;">12 GRONDWERKEN</span>
<div style="left:87px;top:642.16px;width:28px;height:2px;background:repeating-linear-gradient(90deg,#808080 0 2px,transparent 2px 4.4px);"></div>
<svg style="left:114px;top:621.16px;" width="46" height="40" viewBox="0 0 46 40"><path d="M5 12Q5 8 9 8H36Q40 8 40 12V33Q40 36 37 36H8Q5 36 5 33Z" fill="#8a6a30" opacity=".45" transform="translate(2,2)"/><path d="M3 8Q3 3 8 3H16L20 7H34Q37 7 37 10V31Q37 34 34 34H6Q3 34 3 31Z" fill="#f0b844" stroke="#c8862a" stroke-width="2.4"/><path d="M5 13H39Q42 13 41.500 16L40 31Q39.500 34 36 34H6Q3 34 3 31Z" fill="url(#fg)" stroke="#c8862a" stroke-width="2.4"/></svg>
<span class="t" style="top:620.5px;font-size:33.5px;line-height:44px;color:#0c0c14;left:172px;transform:scaleX(0.8772);transform-origin:left center;">20 HEIWERK</span>
<div style="left:98px;top:685.8px;width:17px;height:2px;background:repeating-linear-gradient(90deg,#808080 0 2px,transparent 2px 4.4px);"></div>
<svg style="left:73px;top:674.8px;" width="24" height="24" viewBox="0 0 24 24"><rect x="1.2" y="1.2" width="21.600" height="21.600" rx="2" fill="#ececec" stroke="#a3a3a3" stroke-width="2.4"/><path d="M6 12H18" stroke="#3d58b0" stroke-width="2.6"/><path d="M12 6V18" stroke="#3d58b0" stroke-width="2.6"/></svg>
<svg style="left:114px;top:664.8px;" width="46" height="40" viewBox="0 0 46 40"><path d="M5 12Q5 8 9 8H36Q40 8 40 12V33Q40 36 37 36H8Q5 36 5 33Z" fill="#8a6a30" opacity=".45" transform="translate(2,2)"/><path d="M3 8Q3 3 8 3H16L20 7H34Q37 7 37 10V31Q37 34 34 34H6Q3 34 3 31Z" fill="#f0b844" stroke="#c8862a" stroke-width="2.4"/><path d="M5 13H39Q42 13 41.500 16L40 31Q39.500 34 36 34H6Q3 34 3 31Z" fill="url(#fg)" stroke="#c8862a" stroke-width="2.4"/></svg>
<span class="t" style="top:664.2px;font-size:33.5px;line-height:44px;color:#0c0c14;left:172px;transform:scaleX(0.8637);transform-origin:left center;">21 FUNDERINGSBALKEN</span>
<div style="left:98px;top:729.44px;width:17px;height:2px;background:repeating-linear-gradient(90deg,#808080 0 2px,transparent 2px 4.4px);"></div>
<svg style="left:73px;top:718.44px;" width="24" height="24" viewBox="0 0 24 24"><rect x="1.2" y="1.2" width="21.600" height="21.600" rx="2" fill="#ececec" stroke="#a3a3a3" stroke-width="2.4"/><path d="M6 12H18" stroke="#3d58b0" stroke-width="2.6"/><path d="M12 6V18" stroke="#3d58b0" stroke-width="2.6"/></svg>
<svg style="left:114px;top:708.44px;" width="46" height="40" viewBox="0 0 46 40"><path d="M5 12Q5 8 9 8H36Q40 8 40 12V33Q40 36 37 36H8Q5 36 5 33Z" fill="#8a6a30" opacity=".45" transform="translate(2,2)"/><path d="M3 8Q3 3 8 3H16L20 7H34Q37 7 37 10V31Q37 34 34 34H6Q3 34 3 31Z" fill="#f0b844" stroke="#c8862a" stroke-width="2.4"/><path d="M5 13H39Q42 13 41.500 16L40 31Q39.500 34 36 34H6Q3 34 3 31Z" fill="url(#fg)" stroke="#c8862a" stroke-width="2.4"/></svg>
<span class="t" style="top:707.8px;font-size:33.5px;line-height:44px;color:#0c0c14;left:172px;transform:scaleX(0.8820);transform-origin:left center;">22 METSELWERKEN</span>
<div style="left:98px;top:773.08px;width:17px;height:2px;background:repeating-linear-gradient(90deg,#808080 0 2px,transparent 2px 4.4px);"></div>
<svg style="left:73px;top:762.08px;" width="24" height="24" viewBox="0 0 24 24"><rect x="1.2" y="1.2" width="21.600" height="21.600" rx="2" fill="#ececec" stroke="#a3a3a3" stroke-width="2.4"/><path d="M6 12H18" stroke="#3d58b0" stroke-width="2.6"/></svg>
<svg style="left:114px;top:752.08px;" width="46" height="40" viewBox="0 0 46 40"><path d="M5 12Q5 8 9 8H36Q40 8 40 12V33Q40 36 37 36H8Q5 36 5 33Z" fill="#8a6a30" opacity=".45" transform="translate(2,2)"/><path d="M3 8Q3 3 8 3H16L20 7H34Q37 7 37 10V31Q37 34 34 34H6Q3 34 3 31Z" fill="#f0b844" stroke="#c8862a" stroke-width="2.4"/><path d="M5 13H39Q42 13 41.500 16L40 31Q39.500 34 36 34H6Q3 34 3 31Z" fill="url(#fg)" stroke="#c8862a" stroke-width="2.4"/></svg>
<span class="t" style="top:751.5px;font-size:33.5px;line-height:44px;color:#0c0c14;left:172px;transform:scaleX(0.8620);transform-origin:left center;">21 BETONVLOER</span>
<div style="left:139px;top:816.72px;width:28px;height:2px;background:repeating-linear-gradient(90deg,#808080 0 2px,transparent 2px 4.4px);"></div>
<svg style="left:166px;top:795.72px;" width="46" height="40" viewBox="0 0 46 40"><path d="M5 12Q5 8 9 8H36Q40 8 40 12V33Q40 36 37 36H8Q5 36 5 33Z" fill="#8a6a30" opacity=".45" transform="translate(2,2)"/><path d="M3 8Q3 3 8 3H16L20 7H34Q37 7 37 10V31Q37 34 34 34H6Q3 34 3 31Z" fill="#f0b844" stroke="#c8862a" stroke-width="2.4"/><path d="M5 13H39Q42 13 41.500 16L40 31Q39.500 34 36 34H6Q3 34 3 31Z" fill="url(#fg)" stroke="#c8862a" stroke-width="2.4"/></svg>
<span class="t" style="top:795.1px;font-size:33.5px;line-height:44px;color:#0c0c14;left:223px;transform:scaleX(0.8555);transform-origin:left center;">22.51 Metselwerk</span>
<div style="left:139px;top:860.36px;width:28px;height:2px;background:repeating-linear-gradient(90deg,#808080 0 2px,transparent 2px 4.4px);"></div>
<svg style="left:166px;top:839.36px;" width="46" height="40" viewBox="0 0 46 40"><path d="M5 12Q5 8 9 8H36Q40 8 40 12V33Q40 36 37 36H8Q5 36 5 33Z" fill="#8a6a30" opacity=".45" transform="translate(2,2)"/><path d="M3 8Q3 3 8 3H16L20 7H34Q37 7 37 10V31Q37 34 34 34H6Q3 34 3 31Z" fill="#f0b844" stroke="#c8862a" stroke-width="2.4"/><path d="M5 13H39Q42 13 41.500 16L40 31Q39.500 34 36 34H6Q3 34 3 31Z" fill="url(#fg)" stroke="#c8862a" stroke-width="2.4"/></svg>
<div style="left:218px;top:840.36px;width:230px;height:42px;background:#ececec;"></div>
<span class="t" style="top:838.7px;font-size:33.5px;line-height:44px;color:#0c0c14;left:223px;transform:scaleX(0.8631);transform-origin:left center;">21.50 Betonwerk</span>
<div style="left:98px;top:904px;width:17px;height:2px;background:repeating-linear-gradient(90deg,#808080 0 2px,transparent 2px 4.4px);"></div>
<svg style="left:73px;top:893px;" width="24" height="24" viewBox="0 0 24 24"><rect x="1.2" y="1.2" width="21.600" height="21.600" rx="2" fill="#ececec" stroke="#a3a3a3" stroke-width="2.4"/><path d="M6 12H18" stroke="#3d58b0" stroke-width="2.6"/></svg>
<svg style="left:114px;top:883px;" width="46" height="40" viewBox="0 0 46 40"><path d="M5 12Q5 8 9 8H36Q40 8 40 12V33Q40 36 37 36H8Q5 36 5 33Z" fill="#8a6a30" opacity=".45" transform="translate(2,2)"/><path d="M3 8Q3 3 8 3H16L20 7H34Q37 7 37 10V31Q37 34 34 34H6Q3 34 3 31Z" fill="#f0b844" stroke="#c8862a" stroke-width="2.4"/><path d="M5 13H39Q42 13 41.500 16L40 31Q39.500 34 36 34H6Q3 34 3 31Z" fill="url(#fg)" stroke="#c8862a" stroke-width="2.4"/></svg>
<span class="t" style="top:882.4px;font-size:33.5px;line-height:44px;color:#0c0c14;left:172px;transform:scaleX(0.8623);transform-origin:left center;">24 KAPCONSTRUCTIE</span>
<div style="left:139px;top:947.64px;width:28px;height:2px;background:repeating-linear-gradient(90deg,#808080 0 2px,transparent 2px 4.4px);"></div>
<svg style="left:166px;top:926.64px;" width="46" height="40" viewBox="0 0 46 40"><path d="M5 12Q5 8 9 8H36Q40 8 40 12V33Q40 36 37 36H8Q5 36 5 33Z" fill="#8a6a30" opacity=".45" transform="translate(2,2)"/><path d="M3 8Q3 3 8 3H16L20 7H34Q37 7 37 10V31Q37 34 34 34H6Q3 34 3 31Z" fill="#f0b844" stroke="#c8862a" stroke-width="2.4"/><path d="M5 13H39Q42 13 41.500 16L40 31Q39.500 34 36 34H6Q3 34 3 31Z" fill="url(#fg)" stroke="#c8862a" stroke-width="2.4"/></svg>
<span class="t" style="top:926.0px;font-size:33.5px;line-height:44px;color:#0c0c14;left:223px;transform:scaleX(0.8493);transform-origin:left center;">24.31 Timmerwerk</span>
<div style="left:139px;top:991.28px;width:28px;height:2px;background:repeating-linear-gradient(90deg,#808080 0 2px,transparent 2px 4.4px);"></div>
<svg style="left:166px;top:970.28px;" width="46" height="40" viewBox="0 0 46 40"><path d="M5 12Q5 8 9 8H36Q40 8 40 12V33Q40 36 37 36H8Q5 36 5 33Z" fill="#8a6a30" opacity=".45" transform="translate(2,2)"/><path d="M3 8Q3 3 8 3H16L20 7H34Q37 7 37 10V31Q37 34 34 34H6Q3 34 3 31Z" fill="#f0b844" stroke="#c8862a" stroke-width="2.4"/><path d="M5 13H39Q42 13 41.500 16L40 31Q39.500 34 36 34H6Q3 34 3 31Z" fill="url(#fg)" stroke="#c8862a" stroke-width="2.4"/></svg>
<span class="t" style="top:969.7px;font-size:33.5px;line-height:44px;color:#0c0c14;left:223px;transform:scaleX(0.8852);transform-origin:left center;">50 H.W.A.</span>
<div style="left:98px;top:1034.92px;width:17px;height:2px;background:repeating-linear-gradient(90deg,#808080 0 2px,transparent 2px 4.4px);"></div>
<svg style="left:73px;top:1023.92px;" width="24" height="24" viewBox="0 0 24 24"><rect x="1.2" y="1.2" width="21.600" height="21.600" rx="2" fill="#ececec" stroke="#a3a3a3" stroke-width="2.4"/><path d="M6 12H18" stroke="#3d58b0" stroke-width="2.6"/><path d="M12 6V18" stroke="#3d58b0" stroke-width="2.6"/></svg>
<svg style="left:114px;top:1013.92px;" width="46" height="40" viewBox="0 0 46 40"><path d="M5 12Q5 8 9 8H36Q40 8 40 12V33Q40 36 37 36H8Q5 36 5 33Z" fill="#8a6a30" opacity=".45" transform="translate(2,2)"/><path d="M3 8Q3 3 8 3H16L20 7H34Q37 7 37 10V31Q37 34 34 34H6Q3 34 3 31Z" fill="#f0b844" stroke="#c8862a" stroke-width="2.4"/><path d="M5 13H39Q42 13 41.500 16L40 31Q39.500 34 36 34H6Q3 34 3 31Z" fill="url(#fg)" stroke="#c8862a" stroke-width="2.4"/></svg>
<span class="t" style="top:1013.3px;font-size:33.5px;line-height:44px;color:#0c0c14;left:172px;transform:scaleX(0.8705);transform-origin:left center;">30 BUITENKOZIJNEN</span>
<div style="left:87px;top:1078.56px;width:28px;height:2px;background:repeating-linear-gradient(90deg,#808080 0 2px,transparent 2px 4.4px);"></div>
<svg style="left:114px;top:1057.56px;" width="46" height="40" viewBox="0 0 46 40"><path d="M5 12Q5 8 9 8H36Q40 8 40 12V33Q40 36 37 36H8Q5 36 5 33Z" fill="#8a6a30" opacity=".45" transform="translate(2,2)"/><path d="M3 8Q3 3 8 3H16L20 7H34Q37 7 37 10V31Q37 34 34 34H6Q3 34 3 31Z" fill="#f0b844" stroke="#c8862a" stroke-width="2.4"/><path d="M5 13H39Q42 13 41.500 16L40 31Q39.500 34 36 34H6Q3 34 3 31Z" fill="url(#fg)" stroke="#c8862a" stroke-width="2.4"/></svg>
<span class="t" style="top:1056.9px;font-size:33.5px;line-height:44px;color:#0c0c14;left:172px;transform:scaleX(0.8786);transform-origin:left center;">70 ELEKTRISCHE INSTALLATIE</span>
<div style="left:35px;top:1122.2px;width:27px;height:2px;background:repeating-linear-gradient(90deg,#808080 0 2px,transparent 2px 4.4px);"></div>
<svg style="left:62px;top:1101.2px;" width="46" height="40" viewBox="0 0 46 40"><path d="M5 12Q5 8 9 8H36Q40 8 40 12V33Q40 36 37 36H8Q5 36 5 33Z" fill="#8a6a30" opacity=".45" transform="translate(2,2)"/><path d="M3 8Q3 3 8 3H16L20 7H34Q37 7 37 10V31Q37 34 34 34H6Q3 34 3 31Z" fill="#f0b844" stroke="#c8862a" stroke-width="2.4"/><path d="M5 13H39Q42 13 41.500 16L40 31Q39.500 34 36 34H6Q3 34 3 31Z" fill="url(#fg)" stroke="#c8862a" stroke-width="2.4"/></svg>
<span class="t" style="top:1100.6px;font-size:33.5px;line-height:44px;color:#0c0c14;left:121px;transform:scaleX(0.8528);transform-origin:left center;">Documenten</span>
<div style="left:46px;top:1165.84px;width:16px;height:2px;background:repeating-linear-gradient(90deg,#808080 0 2px,transparent 2px 4.4px);"></div>
<svg style="left:21px;top:1154.84px;" width="24" height="24" viewBox="0 0 24 24"><rect x="1.2" y="1.2" width="21.600" height="21.600" rx="2" fill="#ececec" stroke="#a3a3a3" stroke-width="2.4"/><path d="M6 12H18" stroke="#3d58b0" stroke-width="2.6"/></svg>
<svg style="left:62px;top:1144.84px;" width="46" height="40" viewBox="0 0 46 40"><path d="M5 12Q5 8 9 8H36Q40 8 40 12V33Q40 36 37 36H8Q5 36 5 33Z" fill="#8a6a30" opacity=".45" transform="translate(2,2)"/><path d="M3 8Q3 3 8 3H16L20 7H34Q37 7 37 10V31Q37 34 34 34H6Q3 34 3 31Z" fill="#f0b844" stroke="#c8862a" stroke-width="2.4"/><path d="M5 13H39Q42 13 41.500 16L40 31Q39.500 34 36 34H6Q3 34 3 31Z" fill="url(#fg)" stroke="#c8862a" stroke-width="2.4"/></svg>
<span class="t" style="top:1144.2px;font-size:33.5px;line-height:44px;color:#0c0c14;left:121px;transform:scaleX(0.8509);transform-origin:left center;">Uittrekstaten</span>
<div style="left:87px;top:1209.48px;width:28px;height:2px;background:repeating-linear-gradient(90deg,#808080 0 2px,transparent 2px 4.4px);"></div>
<span class="t" style="top:1187.9px;font-size:33.5px;line-height:44px;color:#0c0c14;left:172px;transform:scaleX(0.8406);transform-origin:left center;">Betonvloer.xlsx</span>
<div style="left:87px;top:1253.12px;width:28px;height:2px;background:repeating-linear-gradient(90deg,#808080 0 2px,transparent 2px 4.4px);"></div>
<span class="t" style="top:1231.5px;font-size:33.5px;line-height:44px;color:#0c0c14;left:172px;transform:scaleX(0.8375);transform-origin:left center;">Metselwerk.xlsx</span>
<div style="left:782px;top:441px;width:3386px;height:6px;background:#8c8c8c;"></div>
<div style="left:782px;top:441px;width:5px;height:1970px;background:#a0a0a0;"></div>
<div style="left:787px;top:447px;width:3325px;height:1965px;background:#fff;"></div>
<div style="left:787px;top:447px;width:3325px;height:100px;background:#e6e6e6;"></div>
<div style="left:2355px;top:447px;width:218px;height:100px;background:#d2d2d2;"></div>
<div style="left:2355px;top:543px;width:218px;height:5px;background:#217346;"></div>
<div style="left:787px;top:546px;width:3325px;height:2px;background:#b9b9b9;"></div>
<div style="left:857px;top:449px;width:2px;height:98px;background:#c2c2c2;"></div>
<div style="left:1252px;top:449px;width:2px;height:98px;background:#c2c2c2;"></div>
<div style="left:1293px;top:449px;width:2px;height:98px;background:#c2c2c2;"></div>
<div style="left:2354px;top:449px;width:2px;height:98px;background:#c2c2c2;"></div>
<div style="left:2572px;top:449px;width:2px;height:98px;background:#c2c2c2;"></div>
<div style="left:2640px;top:449px;width:2px;height:98px;background:#c2c2c2;"></div>
<div style="left:2735px;top:449px;width:2px;height:98px;background:#c2c2c2;"></div>
<div style="left:2953px;top:449px;width:2px;height:98px;background:#c2c2c2;"></div>
<div style="left:3075px;top:449px;width:2px;height:98px;background:#c2c2c2;"></div>
<div style="left:3293px;top:449px;width:2px;height:98px;background:#c2c2c2;"></div>
<div style="left:3510px;top:449px;width:2px;height:98px;background:#c2c2c2;"></div>
<div style="left:3728px;top:449px;width:2px;height:98px;background:#c2c2c2;"></div>
<div style="left:3946px;top:449px;width:2px;height:98px;background:#c2c2c2;"></div>
<div style="left:4109px;top:449px;width:2px;height:98px;background:#c2c2c2;"></div>
<svg style="left:814px;top:508px;" width="30" height="30" viewBox="0 0 30 30"><path d="M29 1V29H1Z" fill="#bcbcbc"/></svg>
<span class="t" style="top:478.4px;font-size:32.5px;line-height:42px;color:#1e1e2a;left:867px;transform:scaleX(0.8623);transform-origin:left center;">Code</span>
<span class="t" style="top:478.4px;font-size:32.5px;line-height:42px;color:#1e1e2a;left:1262.5px;transform:scaleX(0.8069);transform-origin:left center;">S</span>
<span class="t" style="top:474.4px;font-size:38.3px;line-height:50px;color:#1e1e2a;left:1304px;transform:scaleX(0.9850);transform-origin:left center;">Omschrijving</span>
<span class="t" style="top:477.4px;font-size:32.5px;line-height:42px;color:#3d8c7a;right:1610px;transform:scaleX(0.8855);transform-origin:right center;">Hoeveelheid</span>
<span class="t" style="top:477.4px;font-size:32.5px;line-height:42px;color:#1e1e2a;left:2651px;transform:scaleX(0.8439);transform-origin:left center;">Ehd</span>
<span class="t" style="top:477.4px;font-size:32.5px;line-height:42px;color:#1e1e2a;right:1229px;transform:scaleX(0.8306);transform-origin:right center;">Uurnorm</span>
<span class="t" style="top:461.4px;font-size:32.5px;line-height:42px;color:#1e1e2a;left:2963.5px;transform:scaleX(0.8609);transform-origin:left center;">Uurloon</span>
<span class="t" style="top:496.4px;font-size:32.5px;line-height:42px;color:#1e1e2a;left:2963.5px;transform:scaleX(0.8938);transform-origin:left center;">code</span>
<span class="t" style="top:477.4px;font-size:32.5px;line-height:42px;color:#1e1e2a;right:888px;transform:scaleX(0.8516);transform-origin:right center;">Uren</span>
<span class="t" style="top:477.4px;font-size:32.5px;line-height:42px;color:#1e1e2a;right:670px;transform:scaleX(0.8486);transform-origin:right center;">Materiaalprijs</span>
<span class="t" style="top:477.4px;font-size:32.5px;line-height:42px;color:#1e1e2a;right:452.6px;transform:scaleX(0.8486);transform-origin:right center;">Materieelprijs</span>
<span class="t" style="top:477.4px;font-size:32.5px;line-height:42px;color:#1e1e2a;right:235px;transform:scaleX(0.8854);transform-origin:right center;">Onderaann.</span>
<span class="t" style="top:477.4px;font-size:32.5px;line-height:42px;color:#1e1e2a;left:3984.3px;transform:scaleX(0.8200);transform-origin:left center;clip-path:inset(0 21.5% 0 0);">Eenheidsprijs</span>
<div style="left:787px;top:548.5px;width:71px;height:1764px;background:#e9e9e9;"></div>
<div style="left:858px;top:744.5px;width:3252px;height:49px;background:#a9a9a9;"></div>
<div style="left:858px;top:940.5px;width:3252px;height:49px;background:#006400;"></div>
<div style="left:858px;top:989.5px;width:3252px;height:49px;background:#a9a9a9;"></div>
<div style="left:858px;top:1185.5px;width:3252px;height:49px;background:#a9a9a9;"></div>
<div style="left:858px;top:1479.5px;width:3252px;height:49px;background:#006400;"></div>
<div style="left:858px;top:1528.5px;width:3252px;height:49px;background:#a9a9a9;"></div>
<div style="left:858px;top:1773.5px;width:3252px;height:49px;background:#a9a9a9;"></div>
<div style="left:858px;top:1871.5px;width:3252px;height:49px;background:#006400;"></div>
<div style="left:858px;top:1920.5px;width:3252px;height:49px;background:#a9a9a9;"></div>
<div style="left:858px;top:2067.5px;width:3252px;height:49px;background:#a9a9a9;"></div>
<div style="left:858px;top:2214.5px;width:3252px;height:49px;background:#006400;"></div>
<div style="left:787px;top:596.5px;width:71px;height:2px;background:#bdbdbd;"></div>
<div style="left:858px;top:596.5px;width:3252px;height:2px;background:#d4d4d4;"></div>
<div style="left:787px;top:645.5px;width:71px;height:2px;background:#bdbdbd;"></div>
<div style="left:858px;top:645.5px;width:3252px;height:2px;background:#d4d4d4;"></div>
<div style="left:787px;top:694.5px;width:71px;height:2px;background:#bdbdbd;"></div>
<div style="left:858px;top:694.5px;width:3252px;height:2px;background:#d4d4d4;"></div>
<div style="left:787px;top:743.5px;width:71px;height:2px;background:#bdbdbd;"></div>
<div style="left:858px;top:743.5px;width:3252px;height:2px;background:#d4d4d4;"></div>
<div style="left:787px;top:792.5px;width:71px;height:2px;background:#bdbdbd;"></div>
<div style="left:858px;top:792.5px;width:3252px;height:2px;background:#d4d4d4;"></div>
<div style="left:787px;top:841.5px;width:71px;height:2px;background:#bdbdbd;"></div>
<div style="left:858px;top:841.5px;width:3252px;height:2px;background:#d4d4d4;"></div>
<div style="left:787px;top:890.5px;width:71px;height:2px;background:#bdbdbd;"></div>
<div style="left:858px;top:890.5px;width:3252px;height:2px;background:#d4d4d4;"></div>
<div style="left:787px;top:939.5px;width:71px;height:2px;background:#bdbdbd;"></div>
<div style="left:858px;top:939.5px;width:3252px;height:2px;background:#d4d4d4;"></div>
<div style="left:787px;top:988.5px;width:71px;height:2px;background:#bdbdbd;"></div>
<div style="left:858px;top:988.5px;width:3252px;height:2px;background:#d4d4d4;"></div>
<div style="left:787px;top:1037.5px;width:71px;height:2px;background:#bdbdbd;"></div>
<div style="left:858px;top:1037.5px;width:3252px;height:2px;background:#d4d4d4;"></div>
<div style="left:787px;top:1086.5px;width:71px;height:2px;background:#bdbdbd;"></div>
<div style="left:858px;top:1086.5px;width:3252px;height:2px;background:#d4d4d4;"></div>
<div style="left:787px;top:1135.5px;width:71px;height:2px;background:#bdbdbd;"></div>
<div style="left:858px;top:1135.5px;width:3252px;height:2px;background:#d4d4d4;"></div>
<div style="left:787px;top:1184.5px;width:71px;height:2px;background:#bdbdbd;"></div>
<div style="left:858px;top:1184.5px;width:3252px;height:2px;background:#d4d4d4;"></div>
<div style="left:787px;top:1233.5px;width:71px;height:2px;background:#bdbdbd;"></div>
<div style="left:858px;top:1233.5px;width:3252px;height:2px;background:#d4d4d4;"></div>
<div style="left:787px;top:1282.5px;width:71px;height:2px;background:#bdbdbd;"></div>
<div style="left:858px;top:1282.5px;width:3252px;height:2px;background:#d4d4d4;"></div>
<div style="left:787px;top:1331.5px;width:71px;height:2px;background:#bdbdbd;"></div>
<div style="left:858px;top:1331.5px;width:3252px;height:2px;background:#d4d4d4;"></div>
<div style="left:787px;top:1380.5px;width:71px;height:2px;background:#bdbdbd;"></div>
<div style="left:858px;top:1380.5px;width:3252px;height:2px;background:#d4d4d4;"></div>
<div style="left:787px;top:1429.5px;width:71px;height:2px;background:#bdbdbd;"></div>
<div style="left:858px;top:1429.5px;width:3252px;height:2px;background:#d4d4d4;"></div>
<div style="left:787px;top:1478.5px;width:71px;height:2px;background:#bdbdbd;"></div>
<div style="left:858px;top:1478.5px;width:3252px;height:2px;background:#d4d4d4;"></div>
<div style="left:787px;top:1527.5px;width:71px;height:2px;background:#bdbdbd;"></div>
<div style="left:858px;top:1527.5px;width:3252px;height:2px;background:#d4d4d4;"></div>
<div style="left:787px;top:1576.5px;width:71px;height:2px;background:#bdbdbd;"></div>
<div style="left:858px;top:1576.5px;width:3252px;height:2px;background:#d4d4d4;"></div>
<div style="left:787px;top:1625.5px;width:71px;height:2px;background:#bdbdbd;"></div>
<div style="left:858px;top:1625.5px;width:3252px;height:2px;background:#d4d4d4;"></div>
<div style="left:787px;top:1674.5px;width:71px;height:2px;background:#bdbdbd;"></div>
<div style="left:858px;top:1674.5px;width:3252px;height:2px;background:#d4d4d4;"></div>
<div style="left:787px;top:1723.5px;width:71px;height:2px;background:#bdbdbd;"></div>
<div style="left:858px;top:1723.5px;width:3252px;height:2px;background:#d4d4d4;"></div>
<div style="left:787px;top:1772.5px;width:71px;height:2px;background:#bdbdbd;"></div>
<div style="left:858px;top:1772.5px;width:3252px;height:2px;background:#d4d4d4;"></div>
<div style="left:787px;top:1821.5px;width:71px;height:2px;background:#bdbdbd;"></div>
<div style="left:858px;top:1821.5px;width:3252px;height:2px;background:#d4d4d4;"></div>
<div style="left:787px;top:1870.5px;width:71px;height:2px;background:#bdbdbd;"></div>
<div style="left:858px;top:1870.5px;width:3252px;height:2px;background:#d4d4d4;"></div>
<div style="left:787px;top:1919.5px;width:71px;height:2px;background:#bdbdbd;"></div>
<div style="left:858px;top:1919.5px;width:3252px;height:2px;background:#d4d4d4;"></div>
<div style="left:787px;top:1968.5px;width:71px;height:2px;background:#bdbdbd;"></div>
<div style="left:858px;top:1968.5px;width:3252px;height:2px;background:#d4d4d4;"></div>
<div style="left:787px;top:2017.5px;width:71px;height:2px;background:#bdbdbd;"></div>
<div style="left:858px;top:2017.5px;width:3252px;height:2px;background:#d4d4d4;"></div>
<div style="left:787px;top:2066.5px;width:71px;height:2px;background:#bdbdbd;"></div>
<div style="left:858px;top:2066.5px;width:3252px;height:2px;background:#d4d4d4;"></div>
<div style="left:787px;top:2115.5px;width:71px;height:2px;background:#bdbdbd;"></div>
<div style="left:858px;top:2115.5px;width:3252px;height:2px;background:#d4d4d4;"></div>
<div style="left:787px;top:2164.5px;width:71px;height:2px;background:#bdbdbd;"></div>
<div style="left:858px;top:2164.5px;width:3252px;height:2px;background:#d4d4d4;"></div>
<div style="left:787px;top:2213.5px;width:71px;height:2px;background:#bdbdbd;"></div>
<div style="left:858px;top:2213.5px;width:3252px;height:2px;background:#d4d4d4;"></div>
<div style="left:787px;top:2262.5px;width:71px;height:2px;background:#bdbdbd;"></div>
<div style="left:858px;top:2262.5px;width:3252px;height:2px;background:#d4d4d4;"></div>
<div style="left:787px;top:2311.5px;width:71px;height:2px;background:#bdbdbd;"></div>
<div style="left:858px;top:2311.5px;width:3252px;height:2px;background:#d4d4d4;"></div>
<div style="left:857px;top:548.5px;width:2px;height:1764px;background:#bdbdbd;"></div>
<div style="left:1252px;top:548.5px;width:2px;height:1764px;background:#d4d4d4;"></div>
<div style="left:1293px;top:548.5px;width:2px;height:1764px;background:#d4d4d4;"></div>
<div style="left:2354px;top:548.5px;width:2px;height:1764px;background:#d4d4d4;"></div>
<div style="left:2572px;top:548.5px;width:2px;height:1764px;background:#d4d4d4;"></div>
<div style="left:2640px;top:548.5px;width:2px;height:1764px;background:#d4d4d4;"></div>
<div style="left:2735px;top:548.5px;width:2px;height:1764px;background:#d4d4d4;"></div>
<div style="left:2953px;top:548.5px;width:2px;height:1764px;background:#d4d4d4;"></div>
<div style="left:3075px;top:548.5px;width:2px;height:1764px;background:#d4d4d4;"></div>
<div style="left:3293px;top:548.5px;width:2px;height:1764px;background:#d4d4d4;"></div>
<div style="left:3510px;top:548.5px;width:2px;height:1764px;background:#d4d4d4;"></div>
<div style="left:3728px;top:548.5px;width:2px;height:1764px;background:#d4d4d4;"></div>
<div style="left:3946px;top:548.5px;width:2px;height:1764px;background:#d4d4d4;"></div>
<div style="left:4109px;top:548.5px;width:2px;height:1764px;background:#d4d4d4;"></div>
<span class="t" style="top:551.9px;font-size:32px;line-height:42px;color:#2a2a2a;left:822px;transform:translateX(-50%) scaleX(0.9131);transform-origin:center center;">42</span>
<span class="t" style="top:600.9px;font-size:32px;line-height:42px;color:#2a2a2a;left:822px;transform:translateX(-50%) scaleX(0.9131);transform-origin:center center;">43</span>
<span class="t" style="top:649.9px;font-size:32px;line-height:42px;color:#2a2a2a;left:822px;transform:translateX(-50%) scaleX(0.9131);transform-origin:center center;">44</span>
<span class="t" style="top:698.9px;font-size:32px;line-height:42px;color:#2a2a2a;left:822px;transform:translateX(-50%) scaleX(0.9131);transform-origin:center center;">45</span>
<span class="t" style="top:747.9px;font-size:32px;line-height:42px;color:#2a2a2a;left:822px;transform:translateX(-50%) scaleX(0.9131);transform-origin:center center;">46</span>
<span class="t" style="top:796.9px;font-size:32px;line-height:42px;color:#2a2a2a;left:822px;transform:translateX(-50%) scaleX(0.9131);transform-origin:center center;">47</span>
<span class="t" style="top:845.9px;font-size:32px;line-height:42px;color:#2a2a2a;left:822px;transform:translateX(-50%) scaleX(0.9131);transform-origin:center center;">48</span>
<span class="t" style="top:894.9px;font-size:32px;line-height:42px;color:#2a2a2a;left:822px;transform:translateX(-50%) scaleX(0.9131);transform-origin:center center;">49</span>
<span class="t" style="top:943.9px;font-size:32px;line-height:42px;color:#2a2a2a;left:822px;transform:translateX(-50%) scaleX(0.9131);transform-origin:center center;">50</span>
<span class="t" style="top:992.9px;font-size:32px;line-height:42px;color:#2a2a2a;left:822px;transform:translateX(-50%) scaleX(0.9131);transform-origin:center center;">51</span>
<span class="t" style="top:1041.9px;font-size:32px;line-height:42px;color:#2a2a2a;left:822px;transform:translateX(-50%) scaleX(0.9131);transform-origin:center center;">52</span>
<span class="t" style="top:1090.9px;font-size:32px;line-height:42px;color:#2a2a2a;left:822px;transform:translateX(-50%) scaleX(0.9131);transform-origin:center center;">53</span>
<span class="t" style="top:1139.9px;font-size:32px;line-height:42px;color:#2a2a2a;left:822px;transform:translateX(-50%) scaleX(0.9131);transform-origin:center center;">54</span>
<span class="t" style="top:1188.9px;font-size:32px;line-height:42px;color:#2e8b57;left:822px;transform:translateX(-50%) scaleX(0.9131);transform-origin:center center;">55</span>
<span class="t" style="top:1237.9px;font-size:32px;line-height:42px;color:#2a2a2a;left:822px;transform:translateX(-50%) scaleX(0.9131);transform-origin:center center;">56</span>
<span class="t" style="top:1286.9px;font-size:32px;line-height:42px;color:#2a2a2a;left:822px;transform:translateX(-50%) scaleX(0.9131);transform-origin:center center;">57</span>
<span class="t" style="top:1335.9px;font-size:32px;line-height:42px;color:#2a2a2a;left:822px;transform:translateX(-50%) scaleX(0.9131);transform-origin:center center;">58</span>
<span class="t" style="top:1384.9px;font-size:32px;line-height:42px;color:#2a2a2a;left:822px;transform:translateX(-50%) scaleX(0.9131);transform-origin:center center;">59</span>
<span class="t" style="top:1433.9px;font-size:32px;line-height:42px;color:#2a2a2a;left:822px;transform:translateX(-50%) scaleX(0.9131);transform-origin:center center;">60</span>
<span class="t" style="top:1482.9px;font-size:32px;line-height:42px;color:#2a2a2a;left:822px;transform:translateX(-50%) scaleX(0.9131);transform-origin:center center;">61</span>
<span class="t" style="top:1531.9px;font-size:32px;line-height:42px;color:#2a2a2a;left:822px;transform:translateX(-50%) scaleX(0.9131);transform-origin:center center;">62</span>
<span class="t" style="top:1580.9px;font-size:32px;line-height:42px;color:#2a2a2a;left:822px;transform:translateX(-50%) scaleX(0.9131);transform-origin:center center;">63</span>
<span class="t" style="top:1629.9px;font-size:32px;line-height:42px;color:#2a2a2a;left:822px;transform:translateX(-50%) scaleX(0.9131);transform-origin:center center;">64</span>
<span class="t" style="top:1678.9px;font-size:32px;line-height:42px;color:#2a2a2a;left:822px;transform:translateX(-50%) scaleX(0.9131);transform-origin:center center;">65</span>
<span class="t" style="top:1727.9px;font-size:32px;line-height:42px;color:#2a2a2a;left:822px;transform:translateX(-50%) scaleX(0.9131);transform-origin:center center;">66</span>
<span class="t" style="top:1776.9px;font-size:32px;line-height:42px;color:#2a2a2a;left:822px;transform:translateX(-50%) scaleX(0.9131);transform-origin:center center;">67</span>
<span class="t" style="top:1825.9px;font-size:32px;line-height:42px;color:#2a2a2a;left:822px;transform:translateX(-50%) scaleX(0.9131);transform-origin:center center;">68</span>
<span class="t" style="top:1874.9px;font-size:32px;line-height:42px;color:#2a2a2a;left:822px;transform:translateX(-50%) scaleX(0.9131);transform-origin:center center;">69</span>
<span class="t" style="top:1923.9px;font-size:32px;line-height:42px;color:#2a2a2a;left:822px;transform:translateX(-50%) scaleX(0.9131);transform-origin:center center;">70</span>
<span class="t" style="top:1972.9px;font-size:32px;line-height:42px;color:#2a2a2a;left:822px;transform:translateX(-50%) scaleX(0.9131);transform-origin:center center;">71</span>
<span class="t" style="top:2021.9px;font-size:32px;line-height:42px;color:#2a2a2a;left:822px;transform:translateX(-50%) scaleX(0.9131);transform-origin:center center;">72</span>
<span class="t" style="top:2070.9px;font-size:32px;line-height:42px;color:#2a2a2a;left:822px;transform:translateX(-50%) scaleX(0.9131);transform-origin:center center;">73</span>
<span class="t" style="top:2119.9px;font-size:32px;line-height:42px;color:#2a2a2a;left:822px;transform:translateX(-50%) scaleX(0.9131);transform-origin:center center;">74</span>
<span class="t" style="top:2168.9px;font-size:32px;line-height:42px;color:#2a2a2a;left:822px;transform:translateX(-50%) scaleX(0.9131);transform-origin:center center;">75</span>
<span class="t" style="top:2217.9px;font-size:32px;line-height:42px;color:#2a2a2a;left:822px;transform:translateX(-50%) scaleX(0.9131);transform-origin:center center;">76</span>
<span class="t" style="top:2266.9px;font-size:32px;line-height:42px;color:#2a2a2a;left:822px;transform:translateX(-50%) scaleX(0.9131);transform-origin:center center;">77</span>
<div style="left:855px;top:1185.5px;width:4px;height:49px;background:#217346;"></div>
<span class="t" style="top:546.9px;font-size:38.3px;line-height:50px;color:#1a1a22;left:1330px;transform:scaleX(0.9890);transform-origin:left center;">Voegmortel</span>
<span class="t" style="top:550.3px;font-size:29.4px;line-height:38px;color:#1a1a22;right:1608px;">0,396</span>
<svg style="left:2573px;top:549.5px;" width="48" height="46" viewBox="0 0 48 46"><path d="M1 2H46L1 42Z" fill="#f0b860"/><path d="M11 11H24L11 23Z" fill="#fff"/><path d="M5 5H40" stroke="#8a6a30" stroke-width="2" stroke-dasharray="2 3"/><path d="M4 6V36" stroke="#8a6a30" stroke-width="2" stroke-dasharray="2 3"/></svg>
<span class="t" style="top:550.3px;font-size:29.4px;line-height:38px;color:#1a1a22;left:2651px;transform:scaleX(0.9059);transform-origin:left center;">m3</span>
<span class="t" style="top:550.3px;font-size:29.4px;line-height:38px;color:#1a1a22;right:669px;">52,18</span>
<span class="t" style="top:550.3px;font-size:29.4px;line-height:38px;color:#1a1a22;right:56px;clip-path:inset(0 2px 0 0);">52</span>
<span class="t" style="top:595.9px;font-size:38.3px;line-height:50px;color:#1a1a22;left:1330px;transform:scaleX(0.9810);transform-origin:left center;">Voegwerk</span>
<span class="t" style="top:599.3px;font-size:29.4px;line-height:38px;color:#1a1a22;right:1608px;">36,000</span>
<svg style="left:2573px;top:598.5px;" width="48" height="46" viewBox="0 0 48 46"><path d="M1 2H46L1 42Z" fill="#f0b860"/><path d="M11 11H24L11 23Z" fill="#fff"/><path d="M5 5H40" stroke="#8a6a30" stroke-width="2" stroke-dasharray="2 3"/><path d="M4 6V36" stroke="#8a6a30" stroke-width="2" stroke-dasharray="2 3"/></svg>
<span class="t" style="top:599.3px;font-size:29.4px;line-height:38px;color:#1a1a22;left:2651px;transform:scaleX(0.9059);transform-origin:left center;">m2</span>
<span class="t" style="top:599.3px;font-size:29.4px;line-height:38px;color:#1a1a22;right:234px;">3,40</span>
<span class="t" style="top:599.3px;font-size:29.4px;line-height:38px;color:#1a1a22;right:56px;clip-path:inset(0 2px 0 0);">3</span>
<span class="t" style="top:644.9px;font-size:38.3px;line-height:50px;color:#1a1a22;left:1330px;transform:scaleX(0.9858);transform-origin:left center;">Zoutzuur</span>
<span class="t" style="top:648.3px;font-size:29.4px;line-height:38px;color:#1a1a22;right:1608px;">7,200</span>
<svg style="left:2573px;top:647.5px;" width="48" height="46" viewBox="0 0 48 46"><path d="M1 2H46L1 42Z" fill="#f0b860"/><path d="M11 11H24L11 23Z" fill="#fff"/><path d="M5 5H40" stroke="#8a6a30" stroke-width="2" stroke-dasharray="2 3"/><path d="M4 6V36" stroke="#8a6a30" stroke-width="2" stroke-dasharray="2 3"/></svg>
<span class="t" style="top:648.3px;font-size:29.4px;line-height:38px;color:#1a1a22;left:2651px;transform:scaleX(0.8985);transform-origin:left center;">ltr</span>
<span class="t" style="top:648.3px;font-size:29.4px;line-height:38px;color:#1a1a22;right:669px;">0,25</span>
<span class="t" style="top:648.3px;font-size:29.4px;line-height:38px;color:#1a1a22;right:56px;clip-path:inset(0 2px 0 0);">0</span>
<span class="t" style="top:693.9px;font-size:38.3px;line-height:50px;color:#1a1a22;left:1330px;transform:scaleX(1.0031);transform-origin:left center;">Doorstrijken binnenzijde</span>
<span class="t" style="top:697.3px;font-size:29.4px;line-height:38px;color:#1a1a22;right:1608px;">36,000</span>
<svg style="left:2573px;top:696.5px;" width="48" height="46" viewBox="0 0 48 46"><path d="M1 2H46L1 42Z" fill="#f0b860"/><path d="M11 11H24L11 23Z" fill="#fff"/><path d="M5 5H40" stroke="#8a6a30" stroke-width="2" stroke-dasharray="2 3"/><path d="M4 6V36" stroke="#8a6a30" stroke-width="2" stroke-dasharray="2 3"/></svg>
<span class="t" style="top:697.3px;font-size:29.4px;line-height:38px;color:#1a1a22;left:2651px;transform:scaleX(0.9059);transform-origin:left center;">m2</span>
<span class="t" style="top:697.3px;font-size:29.4px;line-height:38px;color:#1a1a22;right:234px;">1,59</span>
<span class="t" style="top:697.3px;font-size:29.4px;line-height:38px;color:#1a1a22;right:56px;clip-path:inset(0 2px 0 0);">1</span>
<span class="t" style="top:746.3px;font-size:29.4px;line-height:38px;color:#1a1a22;font-weight:bold;left:868px;">22.60</span>
<span class="t" style="top:746.3px;font-size:29.4px;line-height:38px;color:#1a1a22;font-weight:bold;left:1273px;transform:translateX(-50%);transform-origin:center center;">2</span>
<span class="t" style="top:746.3px;font-size:29.4px;line-height:38px;color:#1a1a22;font-weight:bold;left:1318px;transform:scaleX(1.0598);transform-origin:left center;">Diversen</span>
<span class="t" style="top:746.3px;font-size:29.4px;line-height:38px;color:#1a1a22;font-weight:bold;right:1608px;">2,000</span>
<span class="t" style="top:746.3px;font-size:29.4px;line-height:38px;color:#1a1a22;font-weight:bold;left:2651px;transform:scaleX(1.0561);transform-origin:left center;">brg</span>
<span class="t" style="top:746.3px;font-size:29.4px;line-height:38px;color:#1a1a22;font-weight:bold;right:1228px;">0,80</span>
<span class="t" style="top:746.3px;font-size:29.4px;line-height:38px;color:#1a1a22;font-weight:bold;right:887px;">1,60</span>
<span class="t" style="top:746.3px;font-size:29.4px;line-height:38px;color:#1a1a22;font-weight:bold;right:669px;">180,78</span>
<span class="t" style="top:746.3px;font-size:29.4px;line-height:38px;color:#1a1a22;font-weight:bold;right:56px;clip-path:inset(0 2px 0 0);">216</span>
<span class="t" style="top:791.9px;font-size:38.3px;line-height:50px;color:#1a1a22;left:1330px;transform:scaleX(0.9983);transform-origin:left center;">Dpc folie aansl. metselwerk/fund.</span>
<span class="t" style="top:795.3px;font-size:29.4px;line-height:38px;color:#1a1a22;right:1608px;">16,000</span>
<span class="t" style="top:795.3px;font-size:29.4px;line-height:38px;color:#1a1a22;left:2651px;transform:scaleX(0.8226);transform-origin:left center;">m1</span>
<span class="t" style="top:795.3px;font-size:29.4px;line-height:38px;color:#1a1a22;right:1228px;">0,10</span>
<span class="t" style="top:795.3px;font-size:29.4px;line-height:38px;color:#1a1a22;right:887px;">1,60</span>
<span class="t" style="top:795.3px;font-size:29.4px;line-height:38px;color:#1a1a22;right:669px;">1,13</span>
<span class="t" style="top:795.3px;font-size:29.4px;line-height:38px;color:#1a1a22;right:56px;clip-path:inset(0 2px 0 0);">5</span>
<span class="t" style="top:844.3px;font-size:29.4px;line-height:38px;color:#1a1a22;left:868px;">100020457</span>
<span class="t" style="top:840.9px;font-size:38.3px;line-height:50px;color:#1a1a22;left:1330px;">Rockwool RockSono Base (210) 1200x600x45 mm</span>
<span class="t" style="top:844.3px;font-size:29.4px;line-height:38px;color:#1a1a22;right:1608px;">36,000</span>
<svg style="left:2573px;top:843.5px;" width="48" height="46" viewBox="0 0 48 46"><path d="M1 2H46L1 42Z" fill="#f0b860"/><path d="M11 11H24L11 23Z" fill="#fff"/><path d="M5 5H40" stroke="#8a6a30" stroke-width="2" stroke-dasharray="2 3"/><path d="M4 6V36" stroke="#8a6a30" stroke-width="2" stroke-dasharray="2 3"/></svg>
<span class="t" style="top:844.3px;font-size:29.4px;line-height:38px;color:#1a1a22;left:2651px;transform:scaleX(0.9059);transform-origin:left center;">m2</span>
<span class="t" style="top:844.3px;font-size:29.4px;line-height:38px;color:#1a1a22;right:669px;">9,54</span>
<span class="t" style="top:844.3px;font-size:29.4px;line-height:38px;color:#1a1a22;right:56px;clip-path:inset(0 2px 0 0);">9</span>
<span class="t" style="top:892.8px;font-size:22px;line-height:29px;color:#1a1a22;left:1266px;">"</span>
<span class="t" style="top:889.9px;font-size:38.3px;line-height:50px;color:#1a1a22;left:1330px;transform:scaleX(1.0074);transform-origin:left center;">Schraagsteiger in norm metselaar</span>
<span class="t" style="top:942.3px;font-size:29.4px;line-height:38px;color:#fff;font-weight:bold;left:868px;">21</span>
<span class="t" style="top:942.3px;font-size:29.4px;line-height:38px;color:#fff;font-weight:bold;left:1273px;transform:translateX(-50%);transform-origin:center center;">1</span>
<span class="t" style="top:942.8px;font-size:28.6px;line-height:37px;color:#fff;font-weight:bold;left:1304px;transform:scaleX(0.9744);transform-origin:left center;">BETONVLOER</span>
<span class="t" style="top:942.3px;font-size:29.4px;line-height:38px;color:#fff;font-weight:bold;right:1608px;">2,000</span>
<span class="t" style="top:942.3px;font-size:29.4px;line-height:38px;color:#fff;font-weight:bold;left:2651px;transform:scaleX(1.0561);transform-origin:left center;">brg</span>
<span class="t" style="top:942.3px;font-size:29.4px;line-height:38px;color:#fff;font-weight:bold;right:1228px;">4,17</span>
<span class="t" style="top:942.3px;font-size:29.4px;line-height:38px;color:#fff;font-weight:bold;right:887px;">8,33</span>
<span class="t" style="top:942.3px;font-size:29.4px;line-height:38px;color:#fff;font-weight:bold;right:669px;">84,67</span>
<span class="t" style="top:942.3px;font-size:29.4px;line-height:38px;color:#fff;font-weight:bold;right:234px;">45,95</span>
<span class="t" style="top:942.3px;font-size:29.4px;line-height:38px;color:#fff;font-weight:bold;right:56px;clip-path:inset(0 2px 0 0);">318</span>
<span class="t" style="top:991.3px;font-size:29.4px;line-height:38px;color:#1a1a22;font-weight:bold;left:868px;">22.51</span>
<span class="t" style="top:991.3px;font-size:29.4px;line-height:38px;color:#1a1a22;font-weight:bold;left:1273px;transform:translateX(-50%);transform-origin:center center;">2</span>
<span class="t" style="top:991.3px;font-size:29.4px;line-height:38px;color:#1a1a22;font-weight:bold;left:1318px;transform:scaleX(1.1359);transform-origin:left center;">Metselwerk</span>
<span class="t" style="top:991.3px;font-size:29.4px;line-height:38px;color:#1a1a22;font-weight:bold;right:1608px;">3,200</span>
<span class="t" style="top:991.3px;font-size:29.4px;line-height:38px;color:#1a1a22;font-weight:bold;left:2651px;transform:scaleX(1.0545);transform-origin:left center;">m2</span>
<span class="t" style="top:991.3px;font-size:29.4px;line-height:38px;color:#1a1a22;font-weight:bold;right:1228px;">1,28</span>
<span class="t" style="top:991.3px;font-size:29.4px;line-height:38px;color:#1a1a22;font-weight:bold;right:887px;">4,10</span>
<span class="t" style="top:991.3px;font-size:29.4px;line-height:38px;color:#1a1a22;font-weight:bold;right:669px;">11,84</span>
<span class="t" style="top:991.3px;font-size:29.4px;line-height:38px;color:#1a1a22;font-weight:bold;right:56px;clip-path:inset(0 2px 0 0);">69</span>
<span class="t" style="top:1036.9px;font-size:38.3px;line-height:50px;color:#1a1a22;left:1330px;transform:scaleX(1.0085);transform-origin:left center;">Opmetselen gevelsteen tbv randkist</span>
<span class="t" style="top:1040.3px;font-size:29.4px;line-height:38px;color:#1a1a22;right:1608px;">0,240</span>
<span class="t" style="top:1040.3px;font-size:29.4px;line-height:38px;color:#1a1a22;left:2651px;transform:scaleX(0.9875);transform-origin:left center;">dzd</span>
<span class="t" style="top:1040.3px;font-size:29.4px;line-height:38px;color:#1a1a22;right:1228px;">15,00</span>
<span class="t" style="top:1040.3px;font-size:29.4px;line-height:38px;color:#1a1a22;right:887px;">3,60</span>
<span class="t" style="top:1040.3px;font-size:29.4px;line-height:38px;color:#1a1a22;right:669px;">136,13</span>
<span class="t" style="top:1040.3px;font-size:29.4px;line-height:38px;color:#1a1a22;right:56px;clip-path:inset(0 2px 0 0);">811</span>
<span class="t" style="top:1085.9px;font-size:38.3px;line-height:50px;color:#1a1a22;left:1330px;transform:scaleX(1.0012);transform-origin:left center;">Maatvoering</span>
<span class="t" style="top:1089.3px;font-size:29.4px;line-height:38px;color:#1a1a22;right:1608px;">1,000</span>
<span class="t" style="top:1089.3px;font-size:29.4px;line-height:38px;color:#1a1a22;left:2651px;transform:scaleX(1.0097);transform-origin:left center;">pst</span>
<span class="t" style="top:1089.3px;font-size:29.4px;line-height:38px;color:#1a1a22;right:1228px;">0,50</span>
<span class="t" style="top:1089.3px;font-size:29.4px;line-height:38px;color:#1a1a22;right:887px;">0,50</span>
<span class="t" style="top:1089.3px;font-size:29.4px;line-height:38px;color:#1a1a22;right:56px;clip-path:inset(0 2px 0 0);">22</span>
<span class="t" style="top:1134.9px;font-size:38.3px;line-height:50px;color:#1a1a22;left:1330px;transform:scaleX(0.9933);transform-origin:left center;">Metselspecie</span>
<span class="t" style="top:1138.3px;font-size:29.4px;line-height:38px;color:#1a1a22;right:1608px;">0,100</span>
<span class="t" style="top:1138.3px;font-size:29.4px;line-height:38px;color:#1a1a22;left:2651px;transform:scaleX(0.9059);transform-origin:left center;">m3</span>
<span class="t" style="top:1138.3px;font-size:29.4px;line-height:38px;color:#1a1a22;right:669px;">52,18</span>
<span class="t" style="top:1138.3px;font-size:29.4px;line-height:38px;color:#1a1a22;right:56px;clip-path:inset(0 2px 0 0);">52</span>
<span class="t" style="top:1187.3px;font-size:29.4px;line-height:38px;color:#1a1a22;font-weight:bold;left:868px;">21.50</span>
<span class="t" style="top:1187.3px;font-size:29.4px;line-height:38px;color:#1a1a22;font-weight:bold;left:1273px;transform:translateX(-50%);transform-origin:center center;">2</span>
<span class="t" style="top:1187.3px;font-size:29.4px;line-height:38px;color:#1a1a22;font-weight:bold;left:1318px;transform:scaleX(1.0887);transform-origin:left center;">Betonwerk</span>
<span class="t" style="top:1187.3px;font-size:29.4px;line-height:38px;color:#1a1a22;font-weight:bold;right:1608px;">12,000</span>
<svg style="left:2356px;top:1186.5px;" width="46" height="46" viewBox="0 0 46 46"><g opacity="0.55"><path d="M18 46L44 18V46Z" fill="#f0b860"/><rect x="1" y="2" width="22" height="22" fill="#3fae78"/><path d="M6 6L18 20M18 6L6 20" stroke="#fff" stroke-width="4"/><path d="M28 4H42V12" stroke="#7a7a7a" stroke-width="2" fill="none"/><path d="M32 8V18M28 14L32 19L36 14" stroke="#9a9a9a" stroke-width="2" fill="none"/><rect x="3" y="31" width="11" height="10" fill="#fff" stroke="#5a5a5a" stroke-width="2.4"/><path d="M26 26L36 30L40 40L30 36Z" fill="#2a5fb0"/><path d="M30 24L33 30M38 28L35 33" stroke="#2a5fb0" stroke-width="2"/></g></svg>
<span class="t" style="top:1187.3px;font-size:29.4px;line-height:38px;color:#1a1a22;font-weight:bold;left:2651px;transform:scaleX(1.0545);transform-origin:left center;">m2</span>
<span class="t" style="top:1187.3px;font-size:29.4px;line-height:38px;color:#1a1a22;font-weight:bold;right:1228px;">0,35</span>
<span class="t" style="top:1187.3px;font-size:29.4px;line-height:38px;color:#1a1a22;font-weight:bold;right:887px;">4,23</span>
<span class="t" style="top:1187.3px;font-size:29.4px;line-height:38px;color:#1a1a22;font-weight:bold;right:669px;">10,95</span>
<span class="t" style="top:1187.3px;font-size:29.4px;line-height:38px;color:#1a1a22;font-weight:bold;right:234px;">7,66</span>
<span class="t" style="top:1187.3px;font-size:29.4px;line-height:38px;color:#1a1a22;font-weight:bold;right:56px;clip-path:inset(0 2px 0 0);">34</span>
<span class="t" style="top:1232.9px;font-size:38.3px;line-height:50px;color:#1a1a22;left:1330px;transform:scaleX(1.0054);transform-origin:left center;">Egaliseren + storten werkvloer</span>
<span class="t" style="top:1236.3px;font-size:29.4px;line-height:38px;color:#1a1a22;right:1608px;">0,396</span>
<svg style="left:2356px;top:1235.5px;" width="46" height="46" viewBox="0 0 46 46"><g><path d="M18 46L44 18V46Z" fill="#f0b860"/><rect x="1" y="2" width="22" height="22" fill="#3fae78"/><path d="M6 6L18 20M18 6L6 20" stroke="#fff" stroke-width="4"/><path d="M28 4H42V12" stroke="#7a7a7a" stroke-width="2" fill="none"/><path d="M32 8V18M28 14L32 19L36 14" stroke="#9a9a9a" stroke-width="2" fill="none"/><rect x="3" y="31" width="11" height="10" fill="#fff" stroke="#5a5a5a" stroke-width="2.4"/><path d="M26 26L36 30L40 40L30 36Z" fill="#2a5fb0"/><path d="M30 24L33 30M38 28L35 33" stroke="#2a5fb0" stroke-width="2"/></g></svg>
<span class="t" style="top:1236.3px;font-size:29.4px;line-height:38px;color:#1a1a22;left:2651px;transform:scaleX(0.9059);transform-origin:left center;">m3</span>
<span class="t" style="top:1236.3px;font-size:29.4px;line-height:38px;color:#1a1a22;right:1228px;">3,00</span>
<span class="t" style="top:1236.3px;font-size:29.4px;line-height:38px;color:#1a1a22;right:887px;">1,19</span>
<span class="t" style="top:1236.3px;font-size:29.4px;line-height:38px;color:#1a1a22;right:669px;">52,18</span>
<span class="t" style="top:1236.3px;font-size:29.4px;line-height:38px;color:#1a1a22;right:56px;clip-path:inset(0 2px 0 0);">187</span>
<span class="t" style="top:1281.9px;font-size:38.3px;line-height:50px;color:#1a1a22;left:1330px;transform:scaleX(1.0025);transform-origin:left center;">Wapeningsnetten 4.5kg/m2</span>
<span class="t" style="top:1285.3px;font-size:29.4px;line-height:38px;color:#1a1a22;right:1608px;">54,000</span>
<svg style="left:2356px;top:1284.5px;" width="46" height="46" viewBox="0 0 46 46"><g><path d="M18 46L44 18V46Z" fill="#f0b860"/><rect x="1" y="2" width="22" height="22" fill="#3fae78"/><path d="M6 6L18 20M18 6L6 20" stroke="#fff" stroke-width="4"/><path d="M28 4H42V12" stroke="#7a7a7a" stroke-width="2" fill="none"/><path d="M32 8V18M28 14L32 19L36 14" stroke="#9a9a9a" stroke-width="2" fill="none"/><rect x="3" y="31" width="11" height="10" fill="#fff" stroke="#5a5a5a" stroke-width="2.4"/><path d="M26 26L36 30L40 40L30 36Z" fill="#2a5fb0"/><path d="M30 24L33 30M38 28L35 33" stroke="#2a5fb0" stroke-width="2"/></g></svg>
<span class="t" style="top:1285.3px;font-size:29.4px;line-height:38px;color:#1a1a22;left:2651px;transform:scaleX(0.9276);transform-origin:left center;">kg</span>
<span class="t" style="top:1285.3px;font-size:29.4px;line-height:38px;color:#1a1a22;right:1228px;">0,01</span>
<span class="t" style="top:1285.3px;font-size:29.4px;line-height:38px;color:#1a1a22;right:887px;">0,59</span>
<span class="t" style="top:1285.3px;font-size:29.4px;line-height:38px;color:#1a1a22;right:669px;">0,57</span>
<span class="t" style="top:1285.3px;font-size:29.4px;line-height:38px;color:#1a1a22;right:56px;clip-path:inset(0 2px 0 0);">1</span>
<span class="t" style="top:1330.9px;font-size:38.3px;line-height:50px;color:#1a1a22;left:1330px;transform:scaleX(1.0029);transform-origin:left center;">Beton incl. verlies</span>
<span class="t" style="top:1334.3px;font-size:29.4px;line-height:38px;color:#1a1a22;right:1608px;">1,248</span>
<svg style="left:2356px;top:1333.5px;" width="46" height="46" viewBox="0 0 46 46"><g><path d="M18 46L44 18V46Z" fill="#f0b860"/><rect x="1" y="2" width="22" height="22" fill="#3fae78"/><path d="M6 6L18 20M18 6L6 20" stroke="#fff" stroke-width="4"/><path d="M28 4H42V12" stroke="#7a7a7a" stroke-width="2" fill="none"/><path d="M32 8V18M28 14L32 19L36 14" stroke="#9a9a9a" stroke-width="2" fill="none"/><rect x="3" y="31" width="11" height="10" fill="#fff" stroke="#5a5a5a" stroke-width="2.4"/><path d="M26 26L36 30L40 40L30 36Z" fill="#2a5fb0"/><path d="M30 24L33 30M38 28L35 33" stroke="#2a5fb0" stroke-width="2"/></g></svg>
<span class="t" style="top:1334.3px;font-size:29.4px;line-height:38px;color:#1a1a22;left:2651px;transform:scaleX(0.9059);transform-origin:left center;">m3</span>
<span class="t" style="top:1334.3px;font-size:29.4px;line-height:38px;color:#1a1a22;right:1228px;">1,00</span>
<span class="t" style="top:1334.3px;font-size:29.4px;line-height:38px;color:#1a1a22;right:887px;">1,25</span>
<span class="t" style="top:1334.3px;font-size:29.4px;line-height:38px;color:#1a1a22;right:669px;">53,32</span>
<span class="t" style="top:1334.3px;font-size:29.4px;line-height:38px;color:#1a1a22;right:56px;clip-path:inset(0 2px 0 0);">98</span>
<span class="t" style="top:1379.9px;font-size:38.3px;line-height:50px;color:#1a1a22;left:1330px;transform:scaleX(1.0064);transform-origin:left center;">Direct afwerken vloer</span>
<span class="t" style="top:1383.3px;font-size:29.4px;line-height:38px;color:#1a1a22;right:1608px;">12,000</span>
<svg style="left:2356px;top:1382.5px;" width="46" height="46" viewBox="0 0 46 46"><g><path d="M18 46L44 18V46Z" fill="#f0b860"/><rect x="1" y="2" width="22" height="22" fill="#3fae78"/><path d="M6 6L18 20M18 6L6 20" stroke="#fff" stroke-width="4"/><path d="M28 4H42V12" stroke="#7a7a7a" stroke-width="2" fill="none"/><path d="M32 8V18M28 14L32 19L36 14" stroke="#9a9a9a" stroke-width="2" fill="none"/><rect x="3" y="31" width="11" height="10" fill="#fff" stroke="#5a5a5a" stroke-width="2.4"/><path d="M26 26L36 30L40 40L30 36Z" fill="#2a5fb0"/><path d="M30 24L33 30M38 28L35 33" stroke="#2a5fb0" stroke-width="2"/></g></svg>
<span class="t" style="top:1383.3px;font-size:29.4px;line-height:38px;color:#1a1a22;left:2651px;transform:scaleX(0.9059);transform-origin:left center;">m2</span>
<span class="t" style="top:1383.3px;font-size:29.4px;line-height:38px;color:#1a1a22;right:1228px;">0,10</span>
<span class="t" style="top:1383.3px;font-size:29.4px;line-height:38px;color:#1a1a22;right:887px;">1,20</span>
<span class="t" style="top:1383.3px;font-size:29.4px;line-height:38px;color:#1a1a22;right:669px;">1,13</span>
<span class="t" style="top:1383.3px;font-size:29.4px;line-height:38px;color:#1a1a22;right:56px;clip-path:inset(0 2px 0 0);">5</span>
<span class="t" style="top:1428.9px;font-size:38.3px;line-height:50px;color:#1a1a22;left:1330px;transform:scaleX(1.0065);transform-origin:left center;">Kraanuren</span>
<span class="t" style="top:1432.3px;font-size:29.4px;line-height:38px;color:#1a1a22;right:1608px;">1,500</span>
<svg style="left:2356px;top:1431.5px;" width="46" height="46" viewBox="0 0 46 46"><g><path d="M18 46L44 18V46Z" fill="#f0b860"/><rect x="1" y="2" width="22" height="22" fill="#3fae78"/><path d="M6 6L18 20M18 6L6 20" stroke="#fff" stroke-width="4"/><path d="M28 4H42V12" stroke="#7a7a7a" stroke-width="2" fill="none"/><path d="M32 8V18M28 14L32 19L36 14" stroke="#9a9a9a" stroke-width="2" fill="none"/><rect x="3" y="31" width="11" height="10" fill="#fff" stroke="#5a5a5a" stroke-width="2.4"/><path d="M26 26L36 30L40 40L30 36Z" fill="#2a5fb0"/><path d="M30 24L33 30M38 28L35 33" stroke="#2a5fb0" stroke-width="2"/></g></svg>
<span class="t" style="top:1432.3px;font-size:29.4px;line-height:38px;color:#1a1a22;left:2651px;transform:scaleX(0.9792);transform-origin:left center;">uur</span>
<span class="t" style="top:1432.3px;font-size:29.4px;line-height:38px;color:#1a1a22;right:234px;">61,26</span>
<span class="t" style="top:1432.3px;font-size:29.4px;line-height:38px;color:#1a1a22;right:56px;clip-path:inset(0 2px 0 0);">61</span>
<span class="t" style="top:1481.3px;font-size:29.4px;line-height:38px;color:#fff;font-weight:bold;right:56px;clip-path:inset(0 2px 0 0);">404</span>
<span class="t" style="top:1530.3px;font-size:29.4px;line-height:38px;color:#1a1a22;font-weight:bold;right:56px;clip-path:inset(0 2px 0 0);">47</span>
<span class="t" style="top:1579.3px;font-size:29.4px;line-height:38px;color:#1a1a22;right:56px;clip-path:inset(0 2px 0 0);">8</span>
<span class="t" style="top:1628.3px;font-size:29.4px;line-height:38px;color:#1a1a22;right:56px;clip-path:inset(0 2px 0 0);">3</span>
<span class="t" style="top:1677.3px;font-size:29.4px;line-height:38px;color:#1a1a22;right:56px;clip-path:inset(0 2px 0 0);">3</span>
<span class="t" style="top:1726.3px;font-size:29.4px;line-height:38px;color:#1a1a22;right:56px;clip-path:inset(0 2px 0 0);">25</span>
<span class="t" style="top:1775.3px;font-size:29.4px;line-height:38px;color:#1a1a22;font-weight:bold;right:56px;clip-path:inset(0 2px 0 0);">79</span>
<span class="t" style="top:1824.3px;font-size:29.4px;line-height:38px;color:#1a1a22;right:56px;clip-path:inset(0 2px 0 0);">158</span>
<span class="t" style="top:1873.3px;font-size:29.4px;line-height:38px;color:#fff;font-weight:bold;right:56px;clip-path:inset(0 2px 0 0);">359</span>
<span class="t" style="top:1922.3px;font-size:29.4px;line-height:38px;color:#1a1a22;font-weight:bold;right:56px;clip-path:inset(0 2px 0 0);">298</span>
<span class="t" style="top:1971.3px;font-size:29.4px;line-height:38px;color:#1a1a22;right:56px;clip-path:inset(0 2px 0 0);">113</span>
<span class="t" style="top:2020.3px;font-size:29.4px;line-height:38px;color:#1a1a22;right:56px;clip-path:inset(0 2px 0 0);">155</span>
<span class="t" style="top:2069.3px;font-size:29.4px;line-height:38px;color:#1a1a22;font-weight:bold;right:56px;clip-path:inset(0 2px 0 0);">90</span>
<span class="t" style="top:2118.3px;font-size:29.4px;line-height:38px;color:#1a1a22;right:56px;clip-path:inset(0 2px 0 0);">68</span>
<span class="t" style="top:2167.3px;font-size:29.4px;line-height:38px;color:#1a1a22;right:56px;clip-path:inset(0 2px 0 0);">113</span>
<span class="t" style="top:2216.3px;font-size:29.4px;line-height:38px;color:#fff;font-weight:bold;right:56px;clip-path:inset(0 2px 0 0);">1.500</span>
<span class="t" style="top:2265.3px;font-size:29.4px;line-height:38px;color:#1a1a22;right:56px;clip-path:inset(0 2px 0 0);">1.500</span>
<div style="left:2356px;top:1186.5px;width:213.5px;height:46.5px;border:5px solid #0000ff;box-sizing:border-box;"></div>
<div style="left:2363px;top:1168px;width:212.6px;height:78.8px;border:6.7px solid #fb0007;border-radius:13px;box-sizing:border-box;"></div>
<div style="left:4113px;top:447px;width:55px;height:1965px;background:#e9e9e9;"></div>
<div style="left:4113px;top:447px;width:45px;height:1955px;background:#dcdcdc;"></div>
<div style="left:4110px;top:447px;width:3.5px;height:1955px;background:#bcbcbc;"></div>
<div style="left:4118px;top:457px;width:39px;height:40px;background:#fff;border:2px solid #cdcdcd;box-sizing:border-box;"></div>
<svg style="left:4125.5px;top:473px;" width="25" height="14" viewBox="0 0 25 14"><path d="M0 14H25L12.5 0Z" fill="#858585"/></svg>
<div style="left:4109.5px;top:447.5px;width:55.5px;height:9.5px;background:#e6e6e6;border:2px solid #a8a8a8;box-sizing:border-box;"></div>
<div style="left:4118px;top:1452px;width:39px;height:855px;background:#fff;border:2px solid #c4c4c4;box-sizing:border-box;"></div>
<div style="left:4118px;top:2308px;width:39px;height:39px;background:#fff;border:2px solid #cdcdcd;box-sizing:border-box;"></div>
<svg style="left:4125.5px;top:2321px;" width="25" height="14" viewBox="0 0 25 14"><path d="M0 0H25L12.5 14Z" fill="#858585"/></svg>
<div style="left:787px;top:2349px;width:3325px;height:3px;background:#b2b2b2;"></div>
<div style="left:787px;top:2352px;width:3381px;height:60px;background:#e8e8e8;"></div>
<div style="left:787px;top:2356.5px;width:3323px;height:41px;background:#dcdcdc;"></div>
<div style="left:800px;top:2358px;width:40px;height:39px;background:#fff;border:2px solid #cdcdcd;box-sizing:border-box;"></div>
<svg style="left:812px;top:2365.5px;" width="16" height="24" viewBox="0 0 16 24"><path d="M15 0V24L1 12Z" fill="#858585"/></svg>
<div style="left:844px;top:2358px;width:60px;height:39px;background:#fff;border:2px solid #cdcdcd;box-sizing:border-box;"></div>
<div style="left:4069px;top:2358px;width:39px;height:39px;background:#fff;border:2px solid #cdcdcd;box-sizing:border-box;"></div>
<svg style="left:4081px;top:2365.5px;" width="16" height="24" viewBox="0 0 16 24"><path d="M1 0V24L15 12Z" fill="#858585"/></svg>
<div style="left:0px;top:2411.5px;width:4168px;height:2.5px;background:#b8b8b8;"></div>
<div style="left:0px;top:2409.5px;width:790px;height:3.5px;background:#9a9a9a;"></div>
<div style="left:0px;top:2414px;width:4168px;height:61px;background:#f0f0f0;"></div>
<div style="left:0px;top:2413px;width:862px;height:62px;background:#487b55;"></div>
<svg style="left:0px;top:2434px;" width="34" height="32" viewBox="0 0 34 32"><path d="M-4 2H24L31 9V30H-4Z" fill="none" stroke="#e8efe9" stroke-width="3"/><rect x="6" y="3" width="14" height="11" fill="#e8efe9"/><rect x="4" y="19" width="20" height="11" fill="none" stroke="#e8efe9" stroke-width="3"/></svg>
<span class="t" style="top:2432.4px;font-size:31px;line-height:40px;color:#f2f6f2;left:523px;transform:scaleX(0.9600);transform-origin:left center;">y.kuiper</span>
<span class="t" style="top:2432.4px;font-size:31px;line-height:40px;color:#f2f6f2;left:650px;transform:scaleX(0.9287);transform-origin:left center;">XTB</span>
<span class="t" style="top:2432.4px;font-size:31px;line-height:40px;color:#f2f6f2;left:732px;transform:scaleX(0.9320);transform-origin:left center;">EUR</span>
<span class="t" style="top:2432.4px;font-size:31px;line-height:40px;color:#f2f6f2;left:819.5px;transform:scaleX(0.8808);transform-origin:left center;">Uur</span>
<div style="left:860px;top:1480px;width:3109.3px;height:1000px;background:#000;"></div>
<div style="left:864px;top:1483.5px;width:3101.5px;height:95px;background:#217346;"></div>
<div style="left:864px;top:1577px;width:3101.5px;height:342px;background:#f3f2f1;"></div>
<svg style="left:914px;top:1511px;" width="48" height="46" viewBox="0 0 48 46"><path d="M3 3H44V43H9L3 37Z" stroke="#fff" fill="none" stroke-width="3"/><path d="M11 3V17H34V3" stroke="#fff" fill="none" stroke-width="3"/><path d="M12 43V27H35V43" stroke="#fff" fill="none" stroke-width="3"/></svg>
<svg style="left:994px;top:1512px;" width="46" height="44" viewBox="0 0 46 44"><path d="M3 4V18H17" stroke="#6fa786" fill="none" stroke-width="3"/><path d="M4 17C14 4 38 8 36 24C35 32 26 38 18 42" stroke="#6fa786" fill="none" stroke-width="3"/></svg>
<svg style="left:1053px;top:1525px;" width="18" height="12" viewBox="0 0 18 12"><path d="M2 2L9 9L16 2" stroke="#6fa786" fill="none" stroke-width="3"/></svg>
<svg style="left:1099px;top:1512px;" width="46" height="44" viewBox="0 0 46 44"><path d="M43 4V18H29" stroke="#6fa786" fill="none" stroke-width="3"/><path d="M42 17C32 4 8 8 10 24C11 32 20 38 28 42" stroke="#6fa786" fill="none" stroke-width="3"/></svg>
<svg style="left:1158px;top:1525px;" width="18" height="12" viewBox="0 0 18 12"><path d="M2 2L9 9L16 2" stroke="#6fa786" fill="none" stroke-width="3"/></svg>
<svg style="left:1214px;top:1520px;" width="22" height="24" viewBox="0 0 22 24"><path d="M2 3H20" stroke="#fff" fill="none" stroke-width="3"/><path d="M3 11L11 19L19 11" stroke="#fff" fill="none" stroke-width="3"/></svg>
<span class="t" style="top:1508.9px;font-size:33px;line-height:43px;color:#fff;left:1502.7px;transform:scaleX(0.9559);transform-origin:left center;">Betonvloer  -  Excel</span>
<div style="left:2018px;top:1498px;width:837px;height:65px;background:#9fcdb3;"></div>
<svg style="left:2072px;top:1510px;" width="40" height="40" viewBox="0 0 40 40"><circle cx="25" cy="14" r="11" stroke="#185c37" stroke-width="3" fill="none"/><path d="M17 22L3 37" stroke="#185c37" stroke-width="3.4"/></svg>
<span class="t" style="top:1509.9px;font-size:33px;line-height:43px;color:#185c37;left:2152.5px;transform:scaleX(0.9675);transform-origin:left center;">Zoeken</span>
<span class="t" style="top:1509.9px;font-size:33px;line-height:43px;color:#fff;left:3275px;transform:scaleX(0.9484);transform-origin:left center;">Yasper Kuiper</span>
<div style="left:3497px;top:1497px;width:66px;height:66px;background:#9a7210;border-radius:50%;"></div>
<span class="t" style="top:1511.3px;font-size:29px;line-height:38px;color:#fff;left:3530px;transform:translateX(-50%) scaleX(0.8530);transform-origin:center center;">YK</span>
<svg style="left:3619px;top:1513px;" width="42" height="32" viewBox="0 0 42 32"><rect x="2" y="2" width="35" height="27" stroke="#fff" fill="none" stroke-width="3"/><path d="M2 8H37" stroke="#fff" fill="none" stroke-width="3"/><path d="M19.5 25V13M13 19L19.5 12.5L26 19" stroke="#fff" fill="none" stroke-width="3"/></svg>
<div style="left:3719px;top:1526.5px;width:28px;height:3px;background:#fff;"></div>
<div style="left:3812px;top:1516px;width:27px;height:27px;border:3px solid #fff;border-radius:3px;box-sizing:border-box;"></div>
<svg style="left:3903px;top:1514px;" width="32" height="32" viewBox="0 0 32 32"><path d="M3 3L29 29M29 3L3 29" stroke="#fff" fill="none" stroke-width="3"/></svg>
<span class="t" style="top:1597.4px;font-size:35px;line-height:46px;color:#444444;left:901px;transform:scaleX(0.9655);transform-origin:left center;">Bestand</span>
<span class="t" style="top:1597.4px;font-size:35px;line-height:46px;color:#444444;left:1101px;transform:scaleX(0.9740);transform-origin:left center;">Start</span>
<span class="t" style="top:1597.4px;font-size:35px;line-height:46px;color:#444444;left:1249.5px;transform:scaleX(1.0067);transform-origin:left center;">Invoegen</span>
<span class="t" style="top:1597.4px;font-size:35px;line-height:46px;color:#444444;left:1472px;transform:scaleX(0.9597);transform-origin:left center;">Tekenen</span>
<span class="t" style="top:1597.4px;font-size:35px;line-height:46px;color:#444444;left:1677.5px;transform:scaleX(1.0174);transform-origin:left center;">Pagina-indeling</span>
<span class="t" style="top:1597.4px;font-size:35px;line-height:46px;color:#444444;left:2003px;transform:scaleX(0.9666);transform-origin:left center;">Formules</span>
<span class="t" style="top:1597.4px;font-size:35px;line-height:46px;color:#444444;left:2220.8px;transform:scaleX(0.9601);transform-origin:left center;">Gegevens</span>
<span class="t" style="top:1597.4px;font-size:35px;line-height:46px;color:#444444;left:2454px;transform:scaleX(1.0115);transform-origin:left center;">Controleren</span>
<span class="t" style="top:1597.4px;font-size:35px;line-height:46px;color:#444444;left:2718px;transform:scaleX(0.9550);transform-origin:left center;">Beeld</span>
<span class="t" style="top:1597.4px;font-size:35px;line-height:46px;color:#444444;left:2880px;transform:scaleX(0.9933);transform-origin:left center;">Help</span>
<span class="t" style="top:1597.4px;font-size:35px;line-height:46px;color:#3b3b3b;font-weight:bold;left:3024px;transform:scaleX(0.9107);transform-origin:left center;">IBIS</span>
<div style="left:3023.5px;top:1645px;width:64px;height:8px;background:#217346;"></div>
<div style="left:3749px;top:1586px;width:183px;height:63px;background:#fff;border:2px solid #dcdcdc;border-radius:7px;box-sizing:border-box;"></div>
<svg style="left:3767px;top:1600px;" width="36" height="36" viewBox="0 0 36 36"><path d="M12 8H3V33H29V24" stroke="#217346" stroke-width="3" fill="none"/><path d="M10 24C10 14 17 10 24 10V3L34 12L24 21V15C18 15 14 17 10 24Z" stroke="#217346" stroke-width="2.6" fill="none"/></svg>
<span class="t" style="top:1595.4px;font-size:35px;line-height:46px;color:#217346;font-weight:bold;left:3814px;transform:scaleX(0.9862);transform-origin:left center;">Delen</span>
<svg style="left:922px;top:1676px;" width="80" height="80" viewBox="0 0 80 80"><g transform="rotate(-45 39 39)" stroke="#b1b0b0" stroke-width="9" fill="none"><rect x="0.5" y="25" width="42" height="28" rx="14"/><rect x="35.5" y="25" width="42" height="28" rx="14"/></g></svg>
<span class="t" style="top:1772.4px;font-size:31px;line-height:40px;color:#b1b1b1;left:893.7px;transform:scaleX(1.0251);transform-origin:left center;">Koppelen</span>
<svg style="left:1095px;top:1674px;" width="80" height="80" viewBox="0 0 80 80"><g transform="rotate(-45 39 39)" stroke="#3a76b4" stroke-width="9" fill="none"><rect x="0.5" y="25" width="42" height="28" rx="14"/><rect x="35.5" y="25" width="42" height="28" rx="14"/></g><path d="M51 53L75 77M75 53L51 77" stroke="#c8452e" stroke-width="10"/></svg>
<span class="t" style="top:1772.4px;font-size:31px;line-height:40px;color:#444444;left:1044px;transform:scaleX(1.0733);transform-origin:left center;">Ontkoppelen</span>
<div style="left:1038.5px;top:1645px;width:207.5px;height:199.5px;border:6.3px solid #fb0007;border-radius:30px;box-sizing:border-box;"></div>
<div style="left:1250.5px;top:1683px;width:2px;height:167px;background:#d2d0ce;"></div>
<svg style="left:1300px;top:1676px;" width="78" height="82" viewBox="0 0 78 82"><path d="M22.5 16.500A30 30 0 1 0 56 17" stroke="#3a76b4" stroke-width="9.5" fill="none"/><path d="M40 4H66L72 10L62 13L62 32L52 30Z" fill="#3a76b4"/></svg>
<span class="t" style="top:1772.4px;font-size:31px;line-height:40px;color:#444444;left:1271px;transform:scaleX(1.0157);transform-origin:left center;">Bijwerken</span>
<svg style="left:1448px;top:1684px;" width="86" height="80" viewBox="0 0 86 80"><rect x="1" y="1" width="76" height="54" fill="#fff" stroke="#8a8a8a" stroke-width="2"/><path d="M20 1V55" stroke="#8a8a8a" stroke-width="1.6"/><path d="M39 1V55" stroke="#8a8a8a" stroke-width="1.6"/><path d="M58 1V55" stroke="#8a8a8a" stroke-width="1.6"/><path d="M1 14.5H77" stroke="#8a8a8a" stroke-width="1.6"/><path d="M1 28.0H77" stroke="#8a8a8a" stroke-width="1.6"/><path d="M1 41.5H77" stroke="#8a8a8a" stroke-width="1.6"/><rect x="20" y="14.5" width="19" height="13.5" fill="#bfe0f7" stroke="#3b78b8" stroke-width="2"/><circle cx="68" cy="52" r="13" fill="#f3f2f1" stroke="#2f6fb5" stroke-width="5.5"/><path d="M59 62L47 74" stroke="#2f6fb5" stroke-width="7"/></svg>
<span class="t" style="top:1772.4px;font-size:31px;line-height:40px;color:#444444;left:1422.6px;transform:scaleX(1.0354);transform-origin:left center;">Herleiden</span>
<div style="left:1587px;top:1669px;width:2px;height:241px;background:#c8c6c4;"></div>
<span class="t" style="top:1883.3px;font-size:28px;line-height:36px;color:#444444;left:1144px;transform:scaleX(1.0443);transform-origin:left center;">Koppelingen</span>
<svg style="left:3914px;top:1894px;" width="32" height="20" viewBox="0 0 32 20"><path d="M3 17L16 4L29 17" stroke="#333" stroke-width="3.4" fill="none"/></svg>
<div style="left:864px;top:1919px;width:3101.5px;height:26px;background:linear-gradient(180deg,#d9d9d9,#e6e6e6);"></div>
<div style="left:864px;top:1945px;width:3101.5px;height:144px;background:#e6e6e6;"></div>
<div style="left:878px;top:1950px;width:273px;height:59px;background:#fcfcfc;border:2px solid #d6d6d6;box-sizing:border-box;"></div>
<span class="t" style="top:1957.9px;font-size:36px;line-height:47px;color:#222;left:886px;transform:scaleX(0.9946);transform-origin:left center;">ibis_af8a40...</span>
<svg style="left:1117px;top:1975px;" width="19" height="11" viewBox="0 0 19 11"><path d="M0 0H18L9 10Z" fill="#7a7a7a"/></svg>
<div style="left:1189px;top:1966.5px;width:5px;height:5px;background:#a6a6a6;border-radius:1px;"></div>
<div style="left:1189px;top:1977.8px;width:5px;height:5px;background:#a6a6a6;border-radius:1px;"></div>
<div style="left:1189px;top:1989.1px;width:5px;height:5px;background:#a6a6a6;border-radius:1px;"></div>
<div style="left:1234px;top:1950px;width:295px;height:59px;background:#fcfcfc;border:2px solid #d6d6d6;box-sizing:border-box;"></div>
<svg style="left:1267px;top:1965px;" width="32" height="30" viewBox="0 0 32 30"><path d="M3 3L29 27M29 3L3 27" stroke="#a0a0a0" stroke-width="3.6"/></svg>
<svg style="left:1360px;top:1964px;" width="42" height="32" viewBox="0 0 42 32"><path d="M3 18L14 28L38 3" stroke="#a0a0a0" stroke-width="4.6" fill="none"/></svg>
<span class="t" style="top:1956.9px;font-size:36px;line-height:47px;color:#444;font-family:'Liberation Serif',serif;font-style:italic;left:1463px;transform:scaleX(1.3085);transform-origin:left center;">fx</span>
<div style="left:1537px;top:1950px;width:2415px;height:59px;background:#fcfcfc;border:2px solid #d6d6d6;box-sizing:border-box;"></div>
<span class="t" style="top:1957.9px;font-size:36px;line-height:47px;color:#222;left:1570px;transform:scaleX(0.8989);transform-origin:left center;">12</span>
<svg style="left:3913px;top:1968px;" width="32" height="24" viewBox="0 0 32 24"><path d="M3 4L16 18L29 4" stroke="#555" stroke-width="5" fill="none"/></svg>
<div style="left:864px;top:2089px;width:3050px;height:400px;background:#fff;"></div>
<div style="left:1730px;top:2038px;width:183px;height:51px;background:#d2d2d2;"></div>
<div style="left:864px;top:2087.5px;width:3050px;height:1.8px;background:#a6a6a6;"></div>
<svg style="left:888px;top:2044px;" width="50" height="42" viewBox="0 0 50 42"><path d="M48 0V40H2Z" fill="#b7b7b7"/></svg>
<span class="t" style="top:2042.4px;font-size:35px;line-height:46px;color:#222;left:1058.25px;transform:translateX(-50%);transform-origin:center center;">A</span>
<div style="left:1178.5px;top:2042px;width:2px;height:46px;background:#cfcfcf;"></div>
<span class="t" style="top:2042.4px;font-size:35px;line-height:46px;color:#222;left:1363.25px;transform:translateX(-50%);transform-origin:center center;">B</span>
<div style="left:1546px;top:2042px;width:2px;height:46px;background:#cfcfcf;"></div>
<span class="t" style="top:2042.4px;font-size:35px;line-height:46px;color:#222;left:1638.5px;transform:translateX(-50%);transform-origin:center center;">C</span>
<div style="left:1729px;top:2042px;width:2px;height:46px;background:#cfcfcf;"></div>
<span class="t" style="top:2042.4px;font-size:35px;line-height:46px;color:#217346;left:1821.5px;transform:translateX(-50%);transform-origin:center center;">D</span>
<div style="left:1912px;top:2042px;width:2px;height:46px;background:#cfcfcf;"></div>
<span class="t" style="top:2042.4px;font-size:35px;line-height:46px;color:#222;left:2004.3px;transform:translateX(-50%);transform-origin:center center;">E</span>
<div style="left:2094.6px;top:2042px;width:2px;height:46px;background:#cfcfcf;"></div>
<span class="t" style="top:2042.4px;font-size:35px;line-height:46px;color:#222;left:2187.05px;transform:translateX(-50%);transform-origin:center center;">F</span>
<div style="left:2277.5px;top:2042px;width:2px;height:46px;background:#cfcfcf;"></div>
<span class="t" style="top:2042.4px;font-size:35px;line-height:46px;color:#222;left:2369.95px;transform:translateX(-50%);transform-origin:center center;">G</span>
<div style="left:2460.4px;top:2042px;width:2px;height:46px;background:#cfcfcf;"></div>
<span class="t" style="top:2042.4px;font-size:35px;line-height:46px;color:#222;left:2552.85px;transform:translateX(-50%);transform-origin:center center;">H</span>
<div style="left:2643.3px;top:2042px;width:2px;height:46px;background:#cfcfcf;"></div>
<span class="t" style="top:2042.4px;font-size:35px;line-height:46px;color:#222;left:2735.75px;transform:translateX(-50%);transform-origin:center center;">I</span>
<div style="left:2826.2px;top:2042px;width:2px;height:46px;background:#cfcfcf;"></div>
<span class="t" style="top:2042.4px;font-size:35px;line-height:46px;color:#222;left:2918.65px;transform:translateX(-50%);transform-origin:center center;">J</span>
<div style="left:3009.1px;top:2042px;width:2px;height:46px;background:#cfcfcf;"></div>
<span class="t" style="top:2042.4px;font-size:35px;line-height:46px;color:#222;left:3101.55px;transform:translateX(-50%);transform-origin:center center;">K</span>
<div style="left:3192px;top:2042px;width:2px;height:46px;background:#cfcfcf;"></div>
<span class="t" style="top:2042.4px;font-size:35px;line-height:46px;color:#222;left:3284.45px;transform:translateX(-50%);transform-origin:center center;">L</span>
<div style="left:3374.9px;top:2042px;width:2px;height:46px;background:#cfcfcf;"></div>
<span class="t" style="top:2042.4px;font-size:35px;line-height:46px;color:#222;left:3467.35px;transform:translateX(-50%);transform-origin:center center;">M</span>
<div style="left:3557.8px;top:2042px;width:2px;height:46px;background:#cfcfcf;"></div>
<span class="t" style="top:2042.4px;font-size:35px;line-height:46px;color:#222;left:3650.25px;transform:translateX(-50%);transform-origin:center center;">N</span>
<div style="left:3740.7px;top:2042px;width:2px;height:46px;background:#cfcfcf;"></div>
<span class="t" style="top:2042.4px;font-size:35px;line-height:46px;color:#222;left:3828px;transform:translateX(-50%);transform-origin:center center;">O</span>
<div style="left:3923.6px;top:2042px;width:2px;height:46px;background:#cfcfcf;"></div>
<div style="left:936px;top:2042px;width:1.8px;height:46px;background:#cfcfcf;"></div>
<div style="left:864px;top:2089px;width:73px;height:400px;background:#e6e6e6;"></div>
<div style="left:864px;top:2089.5px;width:73px;height:52.66px;background:#d2d2d2;"></div>
<div style="left:935px;top:2089.5px;width:3px;height:52.66px;background:#217346;"></div>
<div style="left:1730px;top:2142.16px;width:183px;height:263.8px;background:#ffff00;"></div>
<div style="left:1730px;top:2089.5px;width:183px;height:52.66px;background:#adff2f;"></div>
<div style="left:864px;top:2141.16px;width:73px;height:1.8px;background:#c2c2c2;"></div>
<div style="left:937px;top:2141.16px;width:793px;height:1.7px;background:#dcdcdc;"></div>
<div style="left:1913px;top:2141.16px;width:2001px;height:1.7px;background:#dcdcdc;"></div>
<div style="left:864px;top:2193.82px;width:73px;height:1.8px;background:#c2c2c2;"></div>
<div style="left:937px;top:2193.82px;width:793px;height:1.7px;background:#dcdcdc;"></div>
<div style="left:1913px;top:2193.82px;width:2001px;height:1.7px;background:#dcdcdc;"></div>
<div style="left:864px;top:2246.48px;width:73px;height:1.8px;background:#c2c2c2;"></div>
<div style="left:937px;top:2246.48px;width:793px;height:1.7px;background:#dcdcdc;"></div>
<div style="left:1913px;top:2246.48px;width:2001px;height:1.7px;background:#dcdcdc;"></div>
<div style="left:864px;top:2299.14px;width:73px;height:1.8px;background:#c2c2c2;"></div>
<div style="left:937px;top:2299.14px;width:793px;height:1.7px;background:#dcdcdc;"></div>
<div style="left:1913px;top:2299.14px;width:2001px;height:1.7px;background:#dcdcdc;"></div>
<div style="left:864px;top:2351.8px;width:73px;height:1.8px;background:#c2c2c2;"></div>
<div style="left:937px;top:2351.8px;width:793px;height:1.7px;background:#dcdcdc;"></div>
<div style="left:1913px;top:2351.8px;width:2001px;height:1.7px;background:#dcdcdc;"></div>
<div style="left:864px;top:2404.46px;width:73px;height:1.8px;background:#c2c2c2;"></div>
<div style="left:937px;top:2404.46px;width:793px;height:1.7px;background:#dcdcdc;"></div>
<div style="left:1913px;top:2404.46px;width:2001px;height:1.7px;background:#dcdcdc;"></div>
<div style="left:864px;top:2457.12px;width:73px;height:1.8px;background:#c2c2c2;"></div>
<div style="left:937px;top:2457.12px;width:2977px;height:1.7px;background:#dcdcdc;"></div>
<div style="left:936px;top:2142px;width:1.8px;height:340px;background:#bdbdbd;"></div>
<div style="left:1178.5px;top:2089px;width:1.7px;height:400px;background:#dcdcdc;"></div>
<div style="left:1546px;top:2089px;width:1.7px;height:400px;background:#dcdcdc;"></div>
<div style="left:1729px;top:2404.96px;width:1.7px;height:200px;background:#dcdcdc;"></div>
<div style="left:1912px;top:2404.96px;width:1.7px;height:200px;background:#dcdcdc;"></div>
<div style="left:2094.6px;top:2089px;width:1.7px;height:400px;background:#dcdcdc;"></div>
<div style="left:2277.5px;top:2089px;width:1.7px;height:400px;background:#dcdcdc;"></div>
<div style="left:2460.4px;top:2089px;width:1.7px;height:400px;background:#dcdcdc;"></div>
<div style="left:2643.3px;top:2089px;width:1.7px;height:400px;background:#dcdcdc;"></div>
<div style="left:2826.2px;top:2089px;width:1.7px;height:400px;background:#dcdcdc;"></div>
<div style="left:3009.1px;top:2089px;width:1.7px;height:400px;background:#dcdcdc;"></div>
<div style="left:3192px;top:2089px;width:1.7px;height:400px;background:#dcdcdc;"></div>
<div style="left:3374.9px;top:2089px;width:1.7px;height:400px;background:#dcdcdc;"></div>
<div style="left:3557.8px;top:2089px;width:1.7px;height:400px;background:#dcdcdc;"></div>
<div style="left:3740.7px;top:2089px;width:1.7px;height:400px;background:#dcdcdc;"></div>
<div style="left:3912px;top:2089px;width:2px;height:400px;background:#d0d0d0;"></div>
<span class="t" style="top:2094.9px;font-size:35px;line-height:46px;color:#217346;left:900px;transform:translateX(-50%);transform-origin:center center;">1</span>
<span class="t" style="top:2147.6px;font-size:35px;line-height:46px;color:#333;left:900px;transform:translateX(-50%);transform-origin:center center;">2</span>
<span class="t" style="top:2200.2px;font-size:35px;line-height:46px;color:#333;left:900px;transform:translateX(-50%);transform-origin:center center;">3</span>
<span class="t" style="top:2252.9px;font-size:35px;line-height:46px;color:#333;left:900px;transform:translateX(-50%);transform-origin:center center;">4</span>
<span class="t" style="top:2305.5px;font-size:35px;line-height:46px;color:#333;left:900px;transform:translateX(-50%);transform-origin:center center;">5</span>
<span class="t" style="top:2358.2px;font-size:35px;line-height:46px;color:#333;left:900px;transform:translateX(-50%);transform-origin:center center;">6</span>
<span class="t" style="top:2410.9px;font-size:35px;line-height:46px;color:#333;left:900px;transform:translateX(-50%);transform-origin:center center;">7</span>
<span class="t" style="top:2093.9px;font-size:38.5px;line-height:50px;color:#111;left:944px;transform:scaleX(0.9675);transform-origin:left center;">Betonwerk</span>
<span class="t" style="top:2093.9px;font-size:38.5px;line-height:50px;color:#111;right:2628px;transform:scaleX(0.8403);transform-origin:right center;">1</span>
<span class="t" style="top:2093.9px;font-size:38.5px;line-height:50px;color:#111;right:2262px;transform:scaleX(0.8873);transform-origin:right center;">12</span>
<span class="t" style="top:2146.6px;font-size:38.5px;line-height:50px;color:#111;left:944px;transform:scaleX(0.9851);transform-origin:left center;">Werkvloer</span>
<span class="t" style="top:2146.6px;font-size:38.5px;line-height:50px;color:#111;right:2628px;transform:scaleX(0.9444);transform-origin:right center;">0,033</span>
<span class="t" style="top:2146.6px;font-size:38.5px;line-height:50px;color:#111;left:1554px;transform:scaleX(1.0021);transform-origin:left center;">m³</span>
<span class="t" style="top:2146.6px;font-size:38.5px;line-height:50px;color:#111;right:2262px;transform:scaleX(0.9444);transform-origin:right center;">0,396</span>
<span class="t" style="top:2146.6px;font-size:38.5px;line-height:50px;color:#111;left:1920px;transform:scaleX(1.0021);transform-origin:left center;">m³</span>
<span class="t" style="top:2199.3px;font-size:38.5px;line-height:50px;color:#111;left:944px;transform:scaleX(0.9538);transform-origin:left center;">Wapening</span>
<span class="t" style="top:2199.3px;font-size:38.5px;line-height:50px;color:#111;right:2628px;transform:scaleX(0.9340);transform-origin:right center;">4,5</span>
<span class="t" style="top:2199.3px;font-size:38.5px;line-height:50px;color:#111;left:1554px;transform:scaleX(0.8851);transform-origin:left center;">kg</span>
<span class="t" style="top:2199.3px;font-size:38.5px;line-height:50px;color:#111;right:2262px;transform:scaleX(0.8873);transform-origin:right center;">54</span>
<span class="t" style="top:2199.3px;font-size:38.5px;line-height:50px;color:#111;left:1920px;transform:scaleX(0.8851);transform-origin:left center;">kg</span>
<span class="t" style="top:2251.9px;font-size:38.5px;line-height:50px;color:#111;left:944px;transform:scaleX(0.9540);transform-origin:left center;">Beton</span>
<span class="t" style="top:2251.9px;font-size:38.5px;line-height:50px;color:#111;right:2628px;transform:scaleX(0.9444);transform-origin:right center;">0,104</span>
<span class="t" style="top:2251.9px;font-size:38.5px;line-height:50px;color:#111;left:1554px;transform:scaleX(1.0021);transform-origin:left center;">m³</span>
<span class="t" style="top:2251.9px;font-size:38.5px;line-height:50px;color:#111;right:2262px;transform:scaleX(0.9444);transform-origin:right center;">1,248</span>
<span class="t" style="top:2251.9px;font-size:38.5px;line-height:50px;color:#111;left:1920px;transform:scaleX(1.0021);transform-origin:left center;">m³</span>
<span class="t" style="top:2304.6px;font-size:38.5px;line-height:50px;color:#111;left:944px;transform:scaleX(0.9657);transform-origin:left center;">Afwerken</span>
<span class="t" style="top:2304.6px;font-size:38.5px;line-height:50px;color:#111;right:2628px;transform:scaleX(0.8403);transform-origin:right center;">1</span>
<span class="t" style="top:2304.6px;font-size:38.5px;line-height:50px;color:#111;left:1554px;transform:scaleX(1.0021);transform-origin:left center;">m²</span>
<span class="t" style="top:2304.6px;font-size:38.5px;line-height:50px;color:#111;right:2262px;transform:scaleX(0.8873);transform-origin:right center;">12</span>
<span class="t" style="top:2304.6px;font-size:38.5px;line-height:50px;color:#111;left:1920px;transform:scaleX(1.0021);transform-origin:left center;">m²</span>
<span class="t" style="top:2357.2px;font-size:38.5px;line-height:50px;color:#111;left:944px;transform:scaleX(0.9148);transform-origin:left center;">Kraan</span>
<span class="t" style="top:2357.2px;font-size:38.5px;line-height:50px;color:#111;right:2628px;transform:scaleX(0.9444);transform-origin:right center;">0,125</span>
<span class="t" style="top:2357.2px;font-size:38.5px;line-height:50px;color:#111;left:1554px;transform:scaleX(0.9702);transform-origin:left center;">uur</span>
<span class="t" style="top:2357.2px;font-size:38.5px;line-height:50px;color:#111;right:2262px;transform:scaleX(0.9340);transform-origin:right center;">1,5</span>
<span class="t" style="top:2357.2px;font-size:38.5px;line-height:50px;color:#111;left:1920px;transform:scaleX(0.9702);transform-origin:left center;">uur</span>
<div style="left:1729px;top:2087.5px;width:186px;height:57px;border:3px solid #217346;box-sizing:border-box;"></div>
<div style="left:1905px;top:2136.5px;width:12px;height:12px;background:#217346;border:2px solid #fff;box-sizing:border-box;"></div>
<div style="left:1723px;top:2076.5px;width:211px;height:78px;border:6.5px solid #fb0007;border-radius:13px;box-sizing:border-box;"></div>
<div style="left:3914px;top:2038px;width:51.5px;height:450px;background:#e6e6e6;"></div>
<div style="left:3918px;top:2041px;width:43px;height:44px;background:#fff;border:2px solid #c8c8c8;box-sizing:border-box;"></div>
<svg style="left:3928px;top:2056px;" width="24" height="14" viewBox="0 0 24 14"><path d="M0 13H24L12 1Z" fill="#777"/></svg>
<div style="left:3913px;top:2087px;width:52px;height:400px;background:#fff;border:2.5px solid #b4b4b4;box-sizing:border-box;"></div>
<div style="left:3915.5px;top:2087px;width:3px;height:400px;background:#fff;"></div>
<div style="left:3918px;top:2087px;width:2px;height:400px;background:#b4b4b4;"></div>
</body></html>
